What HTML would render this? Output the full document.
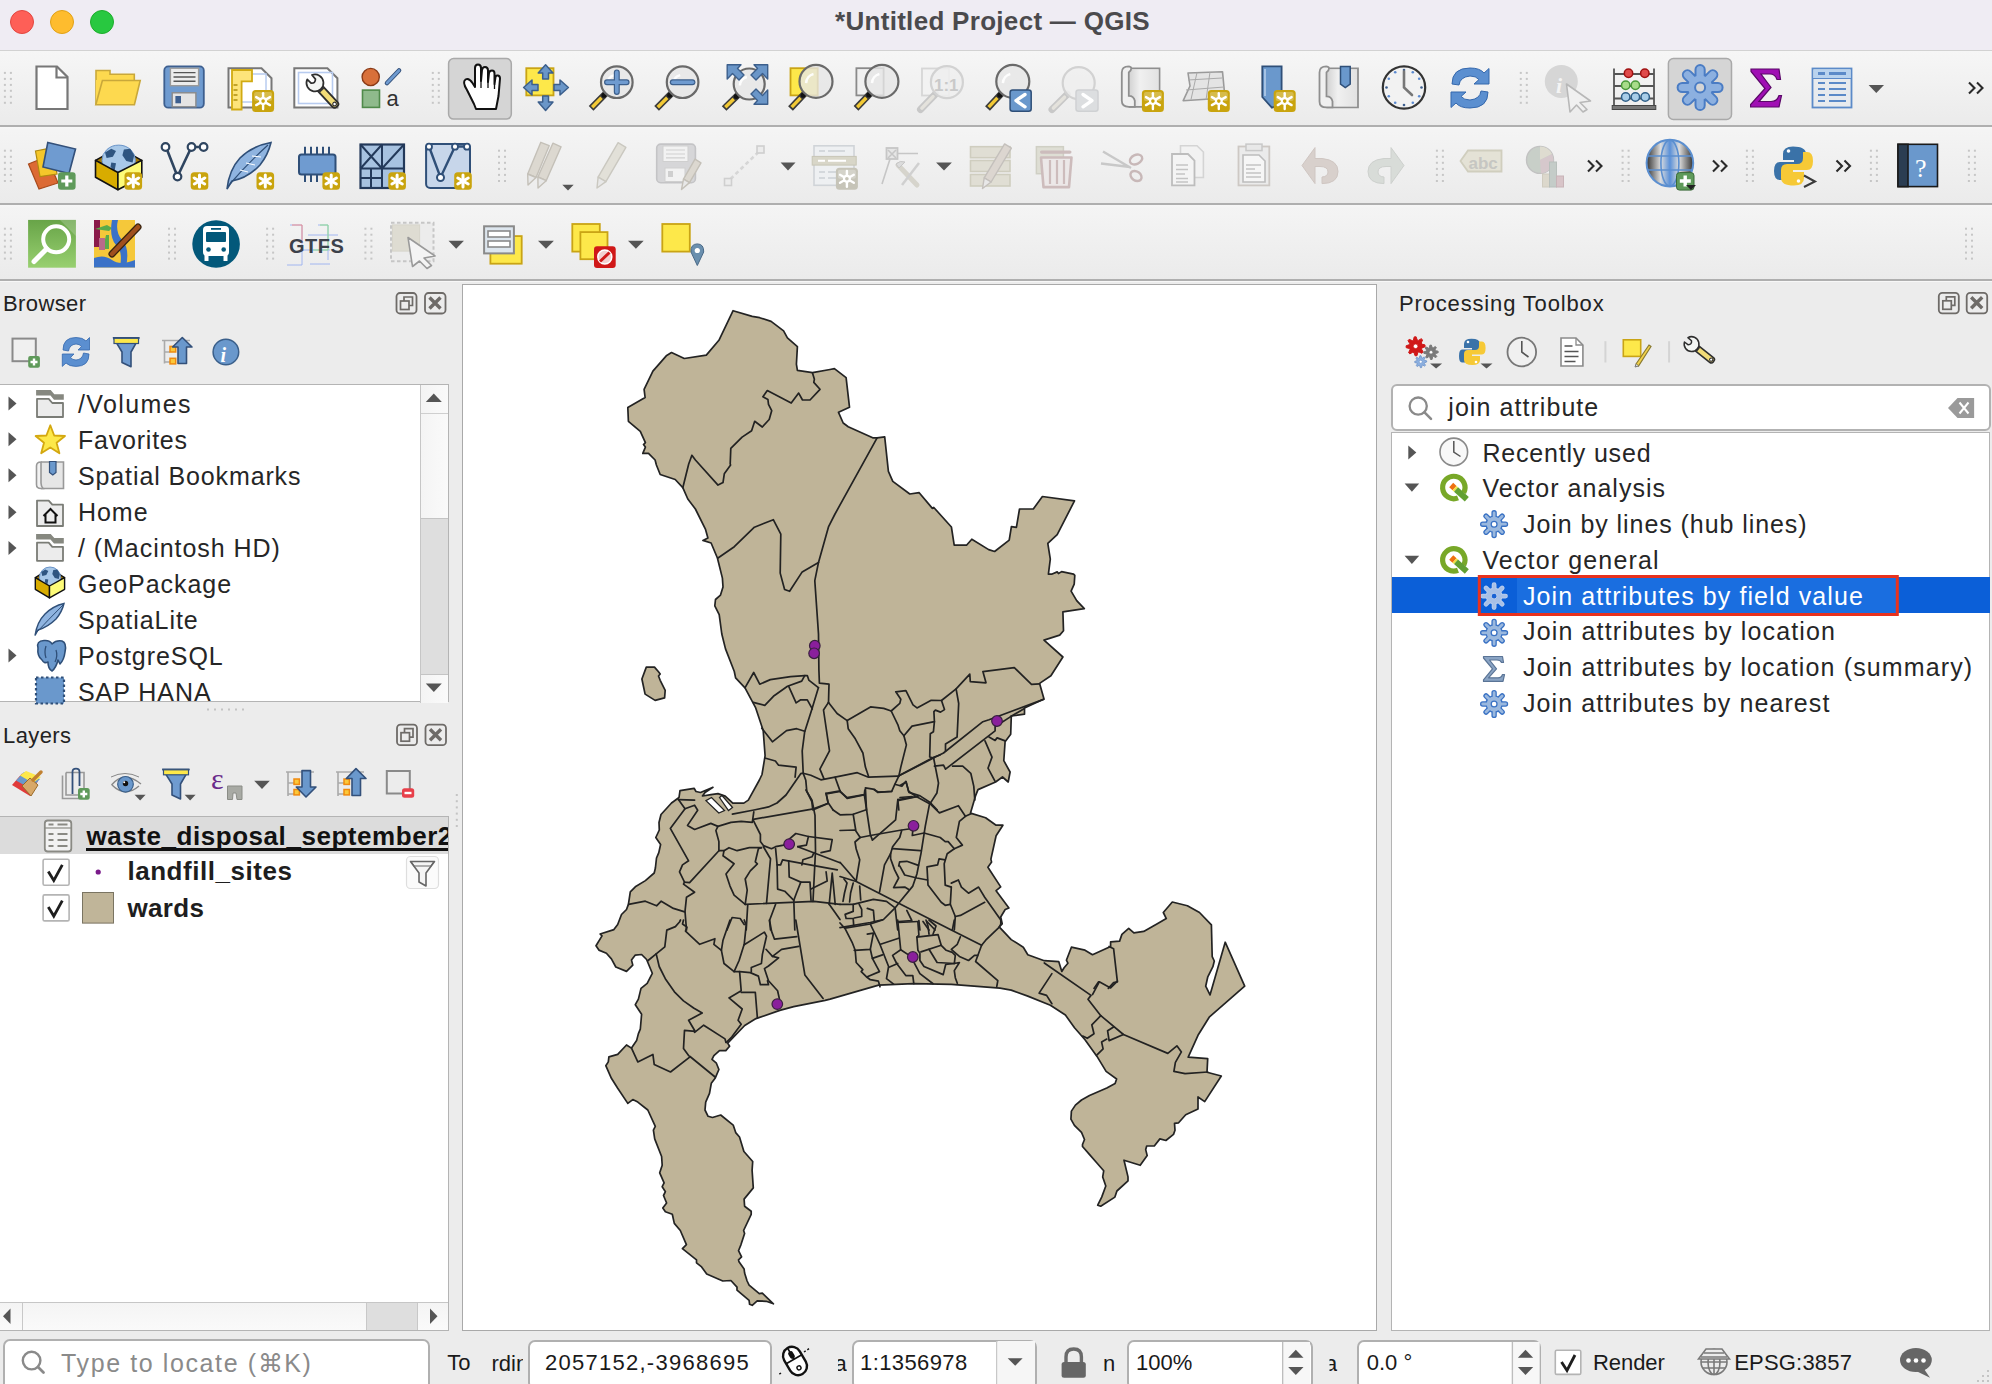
<!DOCTYPE html>
<html><head><meta charset="utf-8">
<style>
*{margin:0;padding:0;box-sizing:border-box}
html,body{width:1992px;height:1384px;overflow:hidden;background:#ececec;font-family:"Liberation Sans",sans-serif;color:#222}
.a{position:absolute}
.t{position:absolute;white-space:nowrap;line-height:1;font-family:"Liberation Sans",sans-serif}
svg{position:absolute;overflow:visible}
</style></head><body>
<!-- title bar -->
<div class="a" style="left:0;top:0;width:1992px;height:51px;background:#efecf3;border-bottom:1px solid #d2d2d2"></div>
<div class="a" style="left:10px;top:10px;width:24px;height:24px;border-radius:50%;background:#fe5f57;border:1px solid #e2463f"></div>
<div class="a" style="left:50px;top:10px;width:24px;height:24px;border-radius:50%;background:#febc2e;border:1px solid #e1a116"></div>
<div class="a" style="left:90px;top:10px;width:24px;height:24px;border-radius:50%;background:#28c840;border:1px solid #1dad2b"></div>
<div class="t" style="left:835px;top:8px;font-size:26px;font-weight:bold;color:#4b4a4d;letter-spacing:0.3px">*Untitled Project — QGIS</div>

<!-- toolbars -->
<div class="a" style="left:0;top:51px;width:1992px;height:76px;background:linear-gradient(#f6f6f6,#ebebeb);border-bottom:2px solid #afafaf"></div>
<div class="a" style="left:0;top:127px;width:1992px;height:78px;background:linear-gradient(#f7f7f7 0px,#f4f4f4 3px,#ebebeb);border-bottom:2px solid #afafaf"></div>
<div class="a" style="left:0;top:205px;width:1992px;height:76px;background:linear-gradient(#f7f7f7 0px,#f4f4f4 3px,#ebebeb);border-bottom:2px solid #afafaf"></div>

<div class="a" style="left:0;top:281px;width:1992px;height:1px;background:#f7f7f7"></div>
<!-- left dock: browser -->
<div class="t" style="left:3px;top:293px;font-size:22px;letter-spacing:0.4px;color:#222">Browser</div>
<div class="a" style="left:0;top:384px;width:449px;height:318px;background:#fff;border:1px solid #b4b4b4;border-left:none"></div>
<!-- browser scrollbar -->
<div class="a" style="left:420px;top:385px;width:28px;height:318px;background:linear-gradient(90deg,#f4f4f4,#fafafa);border-left:1px solid #c6c6c6"></div>
<div class="a" style="left:421px;top:518px;width:27px;height:157px;background:#dedede;border-top:1px solid #c4c4c4;border-bottom:1px solid #c4c4c4"></div>
<div class="a" style="left:421px;top:413px;width:27px;height:1px;background:#cfcfcf"></div>

<!-- layers -->
<div class="t" style="left:3px;top:725px;font-size:22px;letter-spacing:0.4px;color:#222">Layers</div>
<div class="a" style="left:0;top:816px;width:449px;height:515px;background:#fff;border:1px solid #b4b4b4;border-left:none"></div>
<div class="a" style="left:0;top:817px;width:448px;height:37px;background:#dcdcdc"></div>
<!-- h scrollbar -->
<div class="a" style="left:0;top:1302px;width:448px;height:28px;background:linear-gradient(#f4f4f4,#fafafa);border-top:1px solid #c6c6c6"></div>
<div class="a" style="left:22px;top:1303px;width:1px;height:27px;background:#c8c8c8"></div>
<div class="a" style="left:366px;top:1303px;width:52px;height:27px;background:#dedede;border-left:1px solid #c8c8c8;border-right:1px solid #c8c8c8"></div>

<!-- map canvas -->
<div class="a" style="left:462px;top:284px;width:915px;height:1047px;background:#fff;border:1px solid #a9a9a9"></div>

<!-- processing toolbox -->
<div class="t" style="left:1399px;top:293px;font-size:22px;letter-spacing:0.84px;color:#222">Processing Toolbox</div>
<div class="a" style="left:1391px;top:384px;width:600px;height:47px;background:#fff;border:2px solid #b2b2b2;border-radius:6px"></div>
<div class="a" style="left:1391px;top:432px;width:599px;height:899px;background:#fff;border:1px solid #b4b4b4"></div>
<div class="a" style="left:1392px;top:577px;width:598px;height:36px;background:#0b5fd8"></div>

<!-- status bar -->
<div class="a" style="left:3px;top:1339px;width:427px;height:52px;background:#fff;border:2px solid #b0b0b0;border-radius:7px"></div>
<div class="a" style="left:528px;top:1340px;width:244px;height:50px;background:#fff;border:2px solid #b0b0b0;border-radius:7px"></div>
<div class="a" style="left:852px;top:1340px;width:185px;height:50px;background:#fff;border:2px solid #b0b0b0;border-radius:7px"></div>
<div class="a" style="left:1127px;top:1340px;width:186px;height:50px;background:#fff;border:2px solid #b0b0b0;border-radius:7px"></div>
<div class="a" style="left:1357px;top:1340px;width:184px;height:50px;background:#fff;border:2px solid #b0b0b0;border-radius:7px"></div>

<svg style="left:0;top:0" width="1992" height="1384" viewBox="0 0 1992 1384">
<g stroke="#232323" stroke-width="1.7" stroke-linejoin="round" fill="#bfb498">
<polygon points="733.1,310.7 752.2,316.4 759.7,317.7 771.1,321.4 783.6,330.9 787.4,337.8 797.4,346.6 796.4,364.2 797.4,370.4 812.5,372.7 830,369.5 834.4,368.7 846.1,377.7 849.5,407.2 838.5,412.3 843.2,423 848.2,426.7 872.7,437.8 877.1,437.8 884.7,436.8 888.4,471.3 892.8,481.4 909.8,494 919.2,492.7 932.4,508.4 933.8,507.5 951.4,527 954.2,545.2 966.5,545.2 971.8,539.2 988.7,549.6 994.6,551.5 1009.2,540.2 1011.4,526.6 1016.4,527.4 1019.5,509 1033.3,509 1042.4,496.5 1074.5,500.9 1057.2,534.6 1047.8,543.4 1050.3,559.1 1048.4,574.2 1051.6,574.2 1057.2,571.9 1058.5,573.5 1061.6,571.6 1073.6,574.2 1074.8,575.4 1074.2,584.2 1071.1,591.1 1076.7,600.6 1084.3,608.7 1062.9,611.9 1063.5,630.7 1059.7,635.1 1044,640.1 1062.9,657 1050.9,675.8 1039.6,683.4 1044,699.1 1024.5,707.9 1024.5,714.2 1011.3,716 1010.7,734.3 1005.1,741.8 1003.8,760.7 1010.1,772 1008.2,782 1002.5,777 995.6,782 978,789.6 975.5,795.9 970.5,813.1 985.6,817.7 996.1,825.2 1002.9,825.2 996.1,835.7 990.9,859.1 991.6,862.1 987.9,867.3 1000.7,886.9 996.1,890.7 1008.9,908 1005.2,909.5 1000.7,917 1002.2,923.8 999.2,926.8 1011.2,939.6 1023.3,947.2 1027.8,954.7 1044.3,960.7 1058.8,961.7 1061.8,971.5 1064.1,967.7 1067.9,963.2 1066.4,960.2 1071.4,947.2 1085,950.2 1092.5,954.7 1110.6,946.4 1110.6,941.9 1119.6,941.1 1121.9,934.4 1128.7,928.3 1133.9,932.9 1143.7,931.4 1157.3,923.8 1166.3,918.6 1163.3,912.5 1172.3,902 1187.4,905.8 1199.5,912.5 1211.4,924.8 1212.2,956.6 1214.3,961 1212.9,966.7 1207.8,976.8 1205.7,986.2 1210,994.9 1225.2,942.2 1244.7,986.2 1209.2,1017.2 1198,1035.3 1188.2,1057.1 1207.7,1058.6 1207,1072.2 1221.3,1076 1204.7,1101.6 1198,1097 1198,1109.1 1185.7,1114.7 1178.6,1122.8 1174.5,1123.3 1175,1130.3 1173.5,1134.4 1165.9,1140.5 1159.9,1138.9 1154.3,1146 1146.7,1146 1145.7,1149.6 1147.2,1155.6 1140.2,1165.3 1124,1160.2 1128,1176.9 1128,1180.9 1116.9,1191 1114.9,1197.1 1100.7,1206.2 1097.7,1205.2 1101.7,1197.1 1105.8,1186 1102.7,1176.9 1103.7,1170.8 1096.7,1162.7 1089.6,1154.6 1082.5,1146.5 1082.5,1144.5 1084.5,1139.5 1081.5,1132.4 1074.4,1125.3 1070.9,1119.2 1071.4,1111.1 1075.4,1105.1 1081.5,1100 1089.5,1095.5 1106.8,1088 1115.1,1083.5 1116.6,1079 1106.1,1071.4 1097,1056.4 1085,1039.8 1074.5,1027.8 1065.4,1015 1050.4,1005.2 1027.8,996.1 1011.2,990.1 1000,988.1 951.4,984.3 913.5,983.6 878.6,985.1 830.1,999.1 825.1,1000.3 793.7,1006.6 779.8,1010.4 756,1018.6 744.7,1025.5 727.7,1043.1 729.6,1046.2 725.8,1050.6 719.5,1050.6 713.9,1055.6 712,1059.4 716.4,1063.2 718.9,1069.5 715.1,1078.3 711.3,1083.3 709.5,1093.3 705.7,1102.1 705,1110 708.1,1116.3 712.5,1117.5 720.7,1115 733.2,1125.1 735.7,1132.6 739.5,1137 743.9,1151.5 752.7,1161.5 752.1,1170.3 753.3,1187.9 744.1,1199.1 744.6,1206.2 751.2,1211.2 751.2,1214.3 743.6,1230.5 744.6,1233.5 741,1244.6 738.5,1250.7 741.6,1256.8 738.5,1259.8 739,1261.8 744.1,1268.9 744.6,1273 747.1,1281 749.1,1285.1 759.3,1293.7 762.3,1293.2 773.4,1303.8 766.3,1301.3 757.2,1300.8 752.2,1305.3 749.6,1304.3 749.1,1300.3 737,1290.2 737,1287.1 730.9,1280.5 722.8,1281 706.7,1274 701.6,1266.9 696.5,1262.8 696.5,1259.8 682.4,1248.7 686.4,1244.6 680.3,1230.5 674.3,1223.4 672.3,1214.3 665.4,1211.8 662.8,1208 666.6,1203 663.5,1195.5 665.4,1191.7 662.2,1186.7 664.1,1182.9 659.7,1172.8 662.2,1165.3 661.6,1156.5 654.7,1138.9 653.4,1130.1 655.3,1126.3 647.8,1110 637.8,1102.1 632.8,1099.6 627.8,1103.4 617.7,1088.3 611.4,1078.3 605.8,1065.7 608.3,1061.9 608.9,1056.9 617.7,1054.4 626.5,1045 631.5,1048.1 636.6,1040.6 638.4,1033.6 640.3,1029.2 641.6,1014.2 635.3,1004.7 638.4,999.1 641,988.4 647.2,983.4 652.3,973.3 646.6,959.5 641.6,954.5 635.3,955.1 631.5,960.1 632.8,965.1 626.5,971.4 615.8,967 611.4,958.9 606.4,953.2 598.9,950.1 596,945.8 602,935.9 600.1,934 613.9,929.6 617.7,924.5 621.5,914.5 626.5,909.5 628.4,904.4 630.3,891.9 635.3,886.8 645.4,880.6 654.2,873 655.4,868 656.5,858 658.8,852.6 660.6,844.5 655.8,837.5 659.3,830 659,822.5 661,814.5 671.5,803 679,797.5 680,790.6 694.1,788.3 696,791.5 700.5,792.5 713,787.3 705,792.5 702.5,796 711,794.6 718,793.6 725.2,796.1 732.8,803.1 743.8,803.1 748.3,800.1 759.4,780 762,774.5 765.1,755.7 763.2,730.6 755.7,707.9 745,687.8 735.6,677.8 734.3,671.5 725.5,648.9 721.8,634 719.2,614.6 714.8,605.8 715.5,599.5 720.5,595.1 723,587 722.4,578.1 717.4,558 711.1,543 702.9,540.4 707.9,537.9 705.4,529.1 695.4,509 687.8,499 682.8,487.7 675.2,479.5 667.7,477 660.2,474.5 656.4,465 655.1,460 648.5,453.4 642.8,453.4 645.4,447.1 643.5,444.6 645.4,442.7 640.3,431.4 628.4,421.3 627.8,407.5 645.1,397.5 644.1,389.3 652.9,371.1 666.7,355.4 671.5,352.5 684.3,358.5 706.3,355.1 718.9,340.3"/>
<polygon points="646.3,667.1 654.5,667.1 658.3,671.5 660.2,674 658.5,676 660.2,680.3 665.2,690.3 664.6,697.9 655.1,700.4 645.1,694.1 641.9,679"/>
</g>
<polygon points="706,800.6 711.5,797.5 724.5,810.5 718.8,813" fill="#fff" stroke="#232323" stroke-width="1.3"/>
<polygon points="719.5,797.5 722,795.5 732.5,807.5 728.5,810.5" fill="#fff" stroke="#232323" stroke-width="1.3"/>
<g stroke="#222222" stroke-width="1.7" stroke-linejoin="round" stroke-linecap="round" fill="none">
<polyline points="812.5,373 814.4,379.2 813.8,382.4 820,389.3 810,400 802.5,400 798.7,393.1 791.2,403.1 767.3,390.6 762.9,396.8 767.9,399.4 768.5,404.4 771.7,410.7 769.2,419.5 762.3,427 754.7,421.3 751.6,430.8 742.1,437.1 730.8,448.4 730.2,464 730.6,465 724.3,473.8 723,482.6 718,485.1 695.4,460 691.9,455.3 688.7,464 682.8,487.7"/>
<polyline points="877.1,437.8 835,514 828.6,526.6 818.5,562.4 814.8,580.7 818.5,634 818.9,670 819.4,683.2 829,684.2 828.5,702.4"/>
<polyline points="718,558 734.3,546.7 754.4,527.2 773.3,519.7 780.8,534.2 780.2,573.1 784.6,589.5 789.6,591.3 802.2,571.9 818.5,562.4"/>
<polyline points="745.1,687.7 753.7,672.5 759.7,684.2 770.3,679.6 790.6,676.6 804.7,675.6 807.3,675.6 808.8,680.1 818.4,687.7"/>
<polyline points="818.4,687.7 811.8,709.5 804.7,731.7 802.2,750.9 803.2,773.2 805.8,780.3 806.8,791.4 811.8,801.5 812.8,810 828,803.5"/>
<polyline points="753.2,702.4 764.8,705.4 773.4,696.3 787.5,686.2 801.7,681.1 804.7,675.6"/>
<polyline points="788.6,686.2 796.1,702.9 800.7,699.8 807.3,699.8 812.3,708.9"/>
<polyline points="761.8,728.2 772.4,741.8 786.5,730.7 796.7,728.7 804.7,731.2"/>
<polyline points="764.8,758 775.4,761 778.4,765.1 796.1,767.1 795.1,777.2"/>
<polyline points="732.4,814.2 754,810 768.5,806.9 777,803 786,795 800.7,773.7 803.2,773.2 810.8,775.2 820.9,779.8 835.1,777.2 857.3,772.7 868.5,777.2 897.8,776.2 934.2,757 940,755"/>
<polyline points="828.5,702.4 823.5,710 829.5,750.9 819.9,769.1 824,778.8"/>
<polyline points="828.5,702.4 837.1,713.5 847.2,720.6 870.5,706.9 883.7,708.4 891.2,711 899.8,703.4 900.8,699.3 895.8,691.8 905.9,690.7 913,704.9 917,707.9 931.2,700.3 941.5,700.5 956.1,688.8 969.8,674.2 970.3,681.7 986,682.8 982.9,671.6 1014.3,667.6 1031.5,684.3 1039.6,683.8"/>
<polyline points="847.2,720.6 848.2,728.7 855.3,738.8 862.9,753 865.4,767.1 868.5,776.2"/>
<polyline points="891.2,711 897.8,724.6 899.8,730.7 903.9,735.8 906.4,744.9 900.8,767.1 898.8,776.2"/>
<polyline points="903.9,735.8 912,726.1 934.4,721.7 933.9,711.6 935.4,710.1 940.5,712.1 944.5,709.6 941.5,700.5"/>
<polyline points="934.4,721.7 933.4,731.8 930.3,733.8 929.7,757 933.6,758"/>
<polyline points="898.8,776.2 894.8,784.3 901.9,786.3 905.9,781.3 908.9,792.4 920.1,795.9 930.2,802.5 937.3,810"/>
<polyline points="894.8,784.3 891.7,791.4 877.6,792.4 874.5,789.4 865.4,787.9 866.5,810"/>
<polyline points="835.1,777.2 840.2,791.4 847.2,798.5 863.9,794.9"/>
<polyline points="826,793.4 840.2,790.9"/>
<polyline points="826,793.4 828,802.5 833.1,810"/>
<polyline points="897.8,799.5 898.8,810"/>
<polyline points="897.8,799.5 918,796.5"/>
<polyline points="956.1,688.8 958.7,703.5 957.1,736.9 945.5,743.9 945.5,751"/>
<polyline points="1043.6,699.4 989,719.7 982.9,721.7 943.5,753 933.4,758.1 900,775.3"/>
<polyline points="1024.4,708.5 1010.7,716.6"/>
<polyline points="933.6,758 938.5,783 936.9,793 929.4,804.6 925.3,826.2 921.1,852.8 916.9,874 912.8,886.1 898.7,903.3 895.1,907.9 897.7,930"/>
<polyline points="934.4,766.2 943.5,765.2 945.5,769.2 995.1,730.8 995.1,726.8 1010.7,716.6"/>
<polyline points="952.6,766.2 962.7,766.2 970.8,773.3 973.8,786.4 974.8,800"/>
<polyline points="985,740.9 992,757.1 988,768.2 995.1,781.4"/>
<polyline points="989,736.9 995.1,740.4 997.1,737.9 1005.2,740.9"/>
<polyline points="900,785.4 906.1,781.9 908.6,791.3 914.4,795.4 931,804.6 939.4,812.9 958.4,805.7 965.4,816.3 971,813.8"/>
<polyline points="900,797.5 912.1,796.5"/>
<polyline points="753.3,819.3 812,809.2 828.2,803.2 826.3,794 840,791.5"/>
<polyline points="805.9,790 812,800.1 815,815.3 815.5,850.7 813,901.3"/>
<polyline points="678.4,799.6 694.6,800.1"/>
<polyline points="678.4,799.6 685,808.7 670.3,828.4 688.6,860.8 682.5,864.9 679.5,871.9 684.5,882.1 689.6,882.6 718.9,850.7 724,850.7 729,847.7 737.1,850.7 749.3,847.7 761.4,847.7"/>
<polyline points="685,808.7 694.6,805.2 697.7,810.2 687.5,825.4 694.6,829.5 710.8,823.4 717.9,826.4 731,822.4 741.2,821.4 752.3,822.4 753.8,811.8"/>
<polyline points="717.9,826.4 715.9,830.5 718.9,841.6 718.9,850.7"/>
<polyline points="753.3,820.3 760.4,834.5 760.4,841.6 763.4,845.6 771.5,848.7 775.6,846.7 783.7,845.1 788.7,839.6 795.8,833.5 808.4,836.5 806.4,845.1 797.8,846.7"/>
<polyline points="797.8,846.7 840,862.8"/>
<polyline points="808.4,836.5 832.2,839.6 830.2,850.7 821.1,852.7"/>
<polyline points="814,852.7 812,856.8 802.9,859.8 801.9,864.9"/>
<polyline points="761.4,847.7 758.4,848.7 755.3,861.8 757.4,863.8 750.3,870.9 745.2,879 747.2,890.2 745.2,904.3"/>
<polyline points="724,850.7 723,855.8 734.1,863.8 726,874 730,886.1 734.1,895.2 745.2,904.3"/>
<polyline points="763.4,846.7 770.5,858.8 766.5,903.3"/>
<polyline points="775.6,848.7 777.1,864.9 780.6,864.9 782.6,859.8 837.3,869.9"/>
<polyline points="777.1,864.9 777.6,889.1 784.7,891.2 793.8,900.3"/>
<polyline points="788.7,860.8 789.2,877 800.8,882.1 810,882.1 811,900.3"/>
<polyline points="800.8,882.1 796.8,892.2 793.8,900.3 794.8,930"/>
<polyline points="811,889.1 827.2,881 826.1,871.9"/>
<polyline points="745.2,904.3 814,901.3 840,904.3"/>
<polyline points="829.2,904.3 832.2,873 835.2,904.3"/>
<polyline points="829.2,904.3 840,919.5"/>
<polyline points="747.7,905.3 746.2,930"/>
<polyline points="775.6,904.3 769.5,920.5 770.5,930"/>
<polyline points="727,930 732.1,917.5 740.2,918.5 744.2,924.5"/>
<polyline points="628.6,904.3 645.3,901.2 656.6,905.8 661.2,901.2 673.4,908.4 684.7,911.9"/>
<polyline points="684.5,882.1 683.5,884.1 694.6,892.2 686.5,897.2 685,911.4 686.5,930"/>
<polyline points="840,791.5 847.1,797.6 864.3,794.6 864.8,790"/>
<polyline points="864.3,794.6 870.3,834.5 872.4,840.1 895.6,819.8 897.7,800.6 916.9,796.6"/>
<polyline points="874.4,790 878.4,792 891.6,791.5"/>
<polyline points="840,830.5 855.2,830 860.2,837.5 870.3,835.5"/>
<polyline points="833.1,810 840,814.8 853.2,814.3 866.3,809.7"/>
<polyline points="853.2,814.3 855.7,830"/>
<polyline points="860.2,837.5 855,842 856.2,849 859.7,859.8 858,870 856.2,881"/>
<polyline points="840,862.3 856.2,881"/>
<polyline points="840,876.5 856.2,881.5 898.7,903.3 951.3,930 981.6,945.3"/>
<polyline points="1044.3,963 1091,995.4 1088,999.2 1100.8,1015.7 1123.4,1034.5 1167.8,1053.4 1176.9,1045.8 1181.4,1051.9 1175.4,1062.4 1173.9,1071.4 1185.1,1073.7 1207.7,1072"/>
<polyline points="870.3,835.5 901.7,830 908.8,829"/>
<polyline points="901.7,830.5 899.7,837.5 892.6,846.7 890.6,853.7 884.5,864.9 879.5,892.2"/>
<polyline points="912.8,830.5 912.3,835.5 924,833 940.2,837.5 945.2,841.6 948.2,841.6 954.3,848.7 962.4,845.1 956.3,837.5 959.4,821.4 965.4,816.3"/>
<polyline points="892.6,848.7 920.4,850.7"/>
<polyline points="890.6,853.7 890.6,858.8 894.6,869.9 898.7,878 893.6,887.6 904.7,887.1 908.8,889.6"/>
<polyline points="898.7,865.9 899.7,861.8 906.8,861.3 918.4,865.4"/>
<polyline points="899.7,865.9 904.7,875 916.9,878 927.5,880"/>
<polyline points="954.3,848.7 947.2,853.7 944.2,863.8 945.2,885.1 951.3,887.1"/>
<polyline points="945.2,859.8 939.1,858.8 937.6,864.9 927,866.9 928,885.1 941.2,902.3 945.2,905.3 950.3,904.3"/>
<polyline points="951.3,883.1 958.4,880 961.4,887.1 968.5,893.2 978.6,887.1 984.7,897.2 1000.8,920"/>
<polyline points="951.3,887.1 950.3,904.3 955.3,916.5 954.3,930"/>
<polyline points="955.3,916.5 960.4,915.4 984.7,902.3"/>
<polyline points="840,904.3 853.2,904.3 873.4,899.3 886.5,901.3 895.1,907.9"/>
<polyline points="895.1,907.9 883.5,919.5 870.3,922.5 840,927.6"/>
<polyline points="844,879 847,883 844.5,893 843,901.3"/>
<polyline points="853.2,883 850.6,893 849.6,902"/>
<polyline points="859.7,886 860.7,900"/>
<polyline points="853.2,904.3 853.2,911.4 845.1,914.4 846.1,918.5 853.2,918.5 853.7,925.6"/>
<polyline points="859.2,904.3 861.7,909.4 861.7,916.5 854.2,918"/>
<polyline points="867.3,908.4 873.4,910.4 874.4,921.5"/>
<polyline points="906.8,910.4 911.8,920.5 898.7,921.5"/>
<polyline points="918.9,920.5 919.9,930"/>
<polyline points="923,921.5 929,930"/>
<polyline points="927,921.5 935.1,930"/>
<polyline points="648.1,960.5 656.2,953.9 664.8,946.8 666.8,930.1 675.4,926.6 679.5,922 680.5,920"/>
<polyline points="683.5,920 682.5,924 687,927.1 685.5,931.1 699.7,944.3 714.9,938.7 713.9,944.3 721.4,950.3 723,940.2 730,920"/>
<polyline points="656.2,953.9 659.2,966.5 665.3,978.7 674.4,991.8 683.5,1000.9 693.6,1008 702.2,1013.1 688.6,1020.2 695.1,1031.3 684.5,1030.3 683.5,1048.5 688.6,1055.6 690,1056.5 715.1,1077"/>
<polyline points="694.6,1032.3 703.7,1025.2 725,1038.9 726,1042.4"/>
<polyline points="721.4,950.3 724,963.5 734.1,971.6 739.6,971.6 741.2,990.8 729,997.9 742.2,1009 738.1,1020.2 741.2,1024.2 731.7,1037 726.4,1042.4"/>
<polyline points="734.1,971.6 739.1,960.5 744.2,944.3 746.2,925.1 744.2,920"/>
<polyline points="739.6,971.6 750.3,972.6 758.4,976.1 760.4,984.7 768.5,984.7 767.5,980.7"/>
<polyline points="741.2,992.3 755.3,992.3 757.4,1018.1"/>
<polyline points="744.2,944.8 764.4,932.1 766.5,936.2 762.4,954.4 761.4,963.5 751.3,967.5 751.3,971.6"/>
<polyline points="766,949.3 772.5,956.4 778.6,957.9 768.5,966 764.4,968.6 768.5,980.7 777.6,990.8 779.6,999.9"/>
<polyline points="772.5,956.4 781.6,949.3 798.8,946.3"/>
<polyline points="769.5,920 771.5,931.1 774.5,939.2 796.8,936.7"/>
<polyline points="795.8,920 804.9,975.1 823.1,998.4"/>
<polyline points="631.5,1048.1 637.8,1061.9 652.9,1054.4 654.2,1064.4 670.5,1072 690,1056.9"/>
<polyline points="840,923 845.1,928.6 852.1,942.3 855.2,950.3 856.2,962.5 862.8,969.6 861.2,971.6 866.3,976.7 870.3,979.7 878.4,981.2 880,986.8"/>
<polyline points="845.1,928.1 870.3,924 882.5,920"/>
<polyline points="870.3,924 879.5,943.3 888.6,966.5 886.5,978.7 893.6,984.2"/>
<polyline points="880.5,944.3 898.7,938.2"/>
<polyline points="897.7,920 900.7,949.8 892.6,955.4 896.7,963.5 905.8,975.6 912.8,975.6 913.8,983.7"/>
<polyline points="900.7,949.8 910.8,956.4 919.9,973.6 933.1,983.7"/>
<polyline points="889.6,967 897.7,963.5"/>
<polyline points="867.3,934.2 873.4,933.2 870.3,949.3 854.2,950.3"/>
<polyline points="872.4,958.4 882.5,954.9"/>
<polyline points="870.3,949.3 872.4,958.4 879.5,971.6 867.3,976.7"/>
<polyline points="898.7,922.5 917.9,921.5"/>
<polyline points="917.9,922 918.9,935.2 916.9,937.2 917.9,950.3 919.9,953.4 919.9,960.5 924,966.5 943.2,974.6 945.7,964.5 954.3,963.5"/>
<polyline points="916.9,937.2 938.1,934.7 941.2,945.3 920.9,951.9"/>
<polyline points="929,949.3 937.1,962.5 954.3,963.5"/>
<polyline points="941.2,945.3 946.2,950.3 952.3,952.4 955.3,955.4 954.3,963.5 959.4,962.5 954.3,970.6 955.3,977.7 957.3,983.2"/>
<polyline points="926,920 928,926 929,934.2"/>
<polyline points="929,920 936,926 933,934.2"/>
<polyline points="954.3,920 952.3,930.1"/>
<polyline points="960.4,936.7 957.3,944.3 951.3,949.3 959.4,956.4 968.5,960.5 974.5,955.4 977.6,955.4"/>
<polyline points="1000.8,920 1000.8,924 999.3,927.1 985.7,940.2 981.6,945.3 975.6,961.5 997.8,980.7 996.8,986.3"/>
<polyline points="1109.1,946.4 1113.6,948.7 1117.4,981.8 1113.6,982.6 1108.3,988.4"/>
<polyline points="1098.6,981.8 1094,988.4"/>
<polyline points="1051.9,973.6 1039.1,993.1 1046.6,995.4 1051.9,1003.7"/>
<polyline points="1092.5,994.6 1099.3,981.8 1110.6,987.9 1117.4,981.1"/>
<polyline points="1100.8,1015.7 1091.8,1024.8 1094,1033.8 1087.3,1038.3 1082.7,1036.1"/>
<polyline points="1113.6,1027 1107.6,1030.8 1109.1,1040.6 1123.4,1034.5"/>
<polyline points="1106.8,1039.1 1101.6,1042.1 1103.1,1048.9 1097,1054.9"/>
</g>
<g fill="#8a1f9c" stroke="#3a2040" stroke-width="1.2">
<circle cx="814.8" cy="645.7" r="5.3"/>
<circle cx="814.1" cy="653.3" r="5.3"/>
<circle cx="997" cy="721" r="5.3"/>
<circle cx="913.5" cy="825.8" r="5.3"/>
<circle cx="789.2" cy="844.1" r="5.3"/>
<circle cx="912.8" cy="957" r="5.3"/>
<circle cx="777.3" cy="1004.1" r="5.3"/>
</g></svg><svg style="left:0;top:0" width="1992" height="1384" viewBox="0 0 1992 1384">
<rect x="3.9" y="71.9" width="2" height="2" fill="#c6c6c6"/>
<rect x="9.9" y="71.9" width="2" height="2" fill="#c6c6c6"/>
<rect x="3.9" y="77.9" width="2" height="2" fill="#c6c6c6"/>
<rect x="9.9" y="77.9" width="2" height="2" fill="#c6c6c6"/>
<rect x="3.9" y="83.9" width="2" height="2" fill="#c6c6c6"/>
<rect x="9.9" y="83.9" width="2" height="2" fill="#c6c6c6"/>
<rect x="3.9" y="89.8" width="2" height="2" fill="#c6c6c6"/>
<rect x="9.9" y="89.8" width="2" height="2" fill="#c6c6c6"/>
<rect x="3.9" y="95.8" width="2" height="2" fill="#c6c6c6"/>
<rect x="9.9" y="95.8" width="2" height="2" fill="#c6c6c6"/>
<rect x="3.9" y="101.8" width="2" height="2" fill="#c6c6c6"/>
<rect x="9.9" y="101.8" width="2" height="2" fill="#c6c6c6"/>
<path d="M36.5 66.5H57L67.5 77V109H36.5Z" fill="#fff" stroke="#777" stroke-width="2.2"/><path d="M56.5 66.5V77.5H67.5" fill="none" stroke="#777" stroke-width="2.2"/>
<path d="M96 104.5V70.5H110V74.3H134.3V80.5" fill="#fdd94f" stroke="#c9a83a" stroke-width="1.6"/><path d="M96 80H134V104.5H96Z" fill="#fdd94f"/><path d="M102.4 80.5H140.2L134.4 104.7H95.8Z" fill="#fdd94f" stroke="#c9a83a" stroke-width="1.6"/>
<rect x="164.3" y="66.4" width="39.5" height="41.3" rx="4" fill="#6f9bd0" stroke="#3d5f8f" stroke-width="1.8"/><rect x="170.4" y="68.2" width="28.2" height="17.5" fill="#ececec" stroke="#9a9a9a" stroke-width="1.4"/><path d="M173.5 72.6h22M173.5 77h22M173.5 81.2h22" stroke="#555" stroke-width="1.4"/><rect x="172.2" y="92.8" width="23.7" height="14" fill="#e4e4e4" stroke="#8a8a8a" stroke-width="1.4"/><rect x="175.4" y="96" width="5.6" height="7.3" fill="#3d5f8f"/>
<path d="M228.5 68.2H261.5L271.5 78.2V107.4H228.5Z" fill="#fff" stroke="#777" stroke-width="2"/><rect x="236" y="74" width="30" height="28" fill="none" stroke="#b8ccf0" stroke-width="1.5"/><path d="M232 70H252V81.4H241.6V109.5H232Z" fill="#fde47a" stroke="#d1aa12" stroke-width="1.8"/>
<path d="M233.5 85h4M233.5 90h4M233.5 95h4M233.5 100h4" stroke="#b08e10" stroke-width="1.3"/>
<rect x="252.1" y="90.1" width="22.0" height="22.0" rx="3.5" fill="#c9a40e"/>
<rect x="254.1" y="92.1" width="18.0" height="9.0" rx="2" fill="#fff" opacity="0.25"/>
<g stroke="#fff" stroke-width="2.4" stroke-linecap="round">
<line x1="263.1" y1="101.1" x2="263.1" y2="93.2"/>
<line x1="263.1" y1="101.1" x2="256.2" y2="97.1"/>
<line x1="263.1" y1="101.1" x2="256.2" y2="105.1"/>
<line x1="263.1" y1="101.1" x2="263.1" y2="109.0"/>
<line x1="263.1" y1="101.1" x2="270.0" y2="105.1"/>
<line x1="263.1" y1="101.1" x2="270.0" y2="97.1"/>
</g><circle cx="263.1" cy="101.1" r="4" fill="#fff"/><circle cx="263.1" cy="101.1" r="1.8" fill="#c9a40e"/>
<path d="M294.3 68.2H327.4L337.4 78.2V107.4H294.3Z" fill="#fff" stroke="#777" stroke-width="2"/><rect x="298.5" y="72.5" width="34" height="31" fill="none" stroke="#b8ccf0" stroke-width="1.6"/>
<g transform="translate(315.00 83.00) rotate(47.00) scale(1.150)">
<rect x="5" y="-3" width="23" height="6" rx="2.5" fill="#f2dc78" stroke="#2e2e2e" stroke-width="1.6"/>
<rect x="4" y="-3" width="5" height="6" fill="#3a3a3a"/>
<path d="M-6.9 -2.8A7.4 7.4 0 1 1 -6.9 2.8L-2.2 2.6Q0.6 0 -2.2 -2.6Z" fill="#f4f6f4" stroke="#2e2e2e" stroke-width="1.5" stroke-linejoin="round"/>
<circle cx="25" cy="0" r="1.6" fill="#fff" stroke="#2e2e2e" stroke-width="1"/>
</g>
<circle cx="370.7" cy="77" r="8.6" fill="#d8703a" stroke="#8a3a16" stroke-width="1.4"/><line x1="387" y1="83" x2="399" y2="70.5" stroke="#33507a" stroke-width="4.6" stroke-linecap="round"/><line x1="387" y1="83" x2="399" y2="70.5" stroke="#6f9bd0" stroke-width="2.6" stroke-linecap="round"/><rect x="362.5" y="90.1" width="17" height="17.3" fill="#8fba8c" stroke="#4f8a4a" stroke-width="1.6"/>
<text x="386.5" y="106" font-family="Liberation Sans" font-size="22" fill="#333">a</text>
<rect x="431.8" y="71.9" width="2" height="2" fill="#c6c6c6"/>
<rect x="437.8" y="71.9" width="2" height="2" fill="#c6c6c6"/>
<rect x="431.8" y="77.9" width="2" height="2" fill="#c6c6c6"/>
<rect x="437.8" y="77.9" width="2" height="2" fill="#c6c6c6"/>
<rect x="431.8" y="83.9" width="2" height="2" fill="#c6c6c6"/>
<rect x="437.8" y="83.9" width="2" height="2" fill="#c6c6c6"/>
<rect x="431.8" y="89.8" width="2" height="2" fill="#c6c6c6"/>
<rect x="437.8" y="89.8" width="2" height="2" fill="#c6c6c6"/>
<rect x="431.8" y="95.8" width="2" height="2" fill="#c6c6c6"/>
<rect x="437.8" y="95.8" width="2" height="2" fill="#c6c6c6"/>
<rect x="431.8" y="101.8" width="2" height="2" fill="#c6c6c6"/>
<rect x="437.8" y="101.8" width="2" height="2" fill="#c6c6c6"/>
<rect x="448.6" y="58.5" width="62.7" height="60.6" rx="5" fill="#d5d5d5" stroke="#a9a9a9" stroke-width="1.5"/>
<path d="M474 104L467 90Q462 82 465.5 79.5Q469 77.5 472.5 83L475 87V68Q475 64.5 478 64.5Q481 64.5 481 68V81L482 70Q482.5 67 485 67Q488 67 488 70.5V82L489 73Q489.5 70.5 492 70.5Q494.5 70.5 494.5 73.5V84L495.5 77Q496 75 498 75.5Q500 76 500 78.5L498.5 96L496 109H476Z" fill="#fff" stroke="#111" stroke-width="2" stroke-linejoin="round"/>
<path d="M481 80V88M488 82V88M494.5 84V89" stroke="#111" stroke-width="1.3"/>
<rect x="526.3" y="68.2" width="27.2" height="27.2" fill="#fde84a" stroke="#c9a415" stroke-width="1.8"/>
<g fill="#6a96c8" stroke="#3c5f8c" stroke-width="1.5" stroke-linejoin="round"><path d="M545.6 64.7L553 73H548.5V79H542.7V73H538.2Z"/><path d="M545.6 110.4L553 102H548.5V96H542.7V102H538.2Z"/><path d="M523.6 87.5L532 80V84.5H538V90.5H532V95Z"/><path d="M568.4 87.5L560 80V84.5H554V90.5H560V95Z"/></g>
<line x1="605.7" y1="93.5" x2="591.1" y2="108.4" stroke="#3a3a3a" stroke-width="6.6" stroke-linecap="butt"/>
<line x1="601.5" y1="97.8" x2="592.2" y2="107.2" stroke="#f2c935" stroke-width="3.4" stroke-linecap="butt"/>
<circle cx="604.0" cy="95.3" r="2.5" fill="#111"/>
<circle cx="616.8" cy="82.2" r="15.8" fill="#e6e6e6" fill-opacity="0.8" stroke="#6a6a6a" stroke-width="2.2"/>
<path d="M607.3 83.8a9.5 9.5 0 0 1 7.1 -8.7" fill="none" stroke="#fff" stroke-width="2.5" opacity="0.9"/>
<path d="M607 82.2h19.6M616.8 72.4v19.6" stroke="#3c5f8c" stroke-width="6" stroke-linecap="round"/><path d="M607 82.2h19.6M616.8 72.4v19.6" stroke="#6f9bd0" stroke-width="3.6" stroke-linecap="round"/>
<line x1="671.5" y1="93.4" x2="656.6" y2="108.4" stroke="#3a3a3a" stroke-width="6.6" stroke-linecap="butt"/>
<line x1="667.2" y1="97.7" x2="657.8" y2="107.2" stroke="#f2c935" stroke-width="3.4" stroke-linecap="butt"/>
<circle cx="669.7" cy="95.2" r="2.5" fill="#111"/>
<circle cx="682.6" cy="82.2" r="15.8" fill="#e6e6e6" fill-opacity="0.8" stroke="#6a6a6a" stroke-width="2.2"/>
<path d="M673.1 83.8a9.5 9.5 0 0 1 7.1 -8.7" fill="none" stroke="#fff" stroke-width="2.5" opacity="0.9"/>
<path d="M672.8 82.2h19.6" stroke="#3c5f8c" stroke-width="6" stroke-linecap="round"/><path d="M672.8 82.2h19.6" stroke="#6f9bd0" stroke-width="3.6" stroke-linecap="round"/>
<line x1="738.1" y1="94.8" x2="724.1" y2="108.5" stroke="#3a3a3a" stroke-width="6.6" stroke-linecap="butt"/>
<line x1="733.8" y1="99.0" x2="725.3" y2="107.3" stroke="#f2c935" stroke-width="3.4" stroke-linecap="butt"/>
<circle cx="736.3" cy="96.6" r="2.5" fill="#111"/>
<circle cx="749.2" cy="84.0" r="15.5" fill="#e6e6e6" fill-opacity="0.8" stroke="#6a6a6a" stroke-width="2.2"/>
<path d="M739.9 85.5a9.3 9.3 0 0 1 7.0 -8.5" fill="none" stroke="#fff" stroke-width="2.5" opacity="0.9"/>
<g fill="#6a96c8" stroke="#3c5f8c" stroke-width="1.4" stroke-linejoin="round"><path d="M727.2 64.7H741L737.5 68.5L744 75L739 80L732.5 73.5L727.2 79Z"/><path d="M767.7 64.7H754L757.5 68.5L751 75L756 80L762.5 73.5L767.7 79Z"/><path d="M767.7 104.2H754L757.5 100.5L751 94L756 89L762.5 95.5L767.7 90Z"/></g>
<rect x="790.5" y="68.2" width="27.2" height="27.2" fill="#fde84a" stroke="#c9a415" stroke-width="1.8"/>
<line x1="804.7" y1="93.4" x2="790.5" y2="108.4" stroke="#3a3a3a" stroke-width="6.6" stroke-linecap="butt"/>
<line x1="800.6" y1="97.8" x2="791.7" y2="107.2" stroke="#f2c935" stroke-width="3.4" stroke-linecap="butt"/>
<circle cx="803.0" cy="95.2" r="2.5" fill="#111"/>
<circle cx="816.0" cy="81.4" r="16.5" fill="#e6e6e6" fill-opacity="0.8" stroke="#6a6a6a" stroke-width="2.2"/>
<path d="M806.1 83.1a9.9 9.9 0 0 1 7.4 -9.1" fill="none" stroke="#fff" stroke-width="2.5" opacity="0.9"/>
<rect x="856.4" y="68.2" width="27.2" height="27.2" fill="#f0f0f0" stroke="#8a8a8a" stroke-width="1.8"/>
<line x1="870.5" y1="93.3" x2="856.0" y2="108.4" stroke="#3a3a3a" stroke-width="6.6" stroke-linecap="butt"/>
<line x1="866.3" y1="97.7" x2="857.2" y2="107.2" stroke="#f2c935" stroke-width="3.4" stroke-linecap="butt"/>
<circle cx="868.8" cy="95.1" r="2.5" fill="#111"/>
<circle cx="881.9" cy="81.4" r="16.5" fill="#e6e6e6" fill-opacity="0.8" stroke="#6a6a6a" stroke-width="2.2"/>
<path d="M872.0 83.1a9.9 9.9 0 0 1 7.4 -9.1" fill="none" stroke="#fff" stroke-width="2.5" opacity="0.9"/>
<rect x="922" y="68.5" width="27" height="27" fill="#f2f2f2" stroke="#d6d6d6" stroke-width="1.8"/>
<line x1="935.8" y1="93.7" x2="920.5" y2="109.5" stroke="#c8c8c8" stroke-width="7" stroke-linecap="round"/>
<line x1="933.0" y1="96.6" x2="921.9" y2="108.1" stroke="#e4e2dc" stroke-width="3.5" stroke-linecap="round"/>
<circle cx="946.9" cy="82.2" r="16.0" fill="#eeeeee" fill-opacity="0.85" stroke="#d2d2d2" stroke-width="2.2"/>
<text x="934" y="91" font-family="Liberation Sans" font-weight="bold" font-size="17" fill="#c9c9c9">1:1</text>
<line x1="1001.5" y1="93.4" x2="987.5" y2="108.4" stroke="#3a3a3a" stroke-width="6.6" stroke-linecap="butt"/>
<line x1="997.4" y1="97.8" x2="988.7" y2="107.2" stroke="#f2c935" stroke-width="3.4" stroke-linecap="butt"/>
<circle cx="999.8" cy="95.3" r="2.5" fill="#111"/>
<circle cx="1012.8" cy="81.4" r="16.5" fill="#e6e6e6" fill-opacity="0.8" stroke="#6a6a6a" stroke-width="2.2"/>
<path d="M1002.9 83.1a9.9 9.9 0 0 1 7.4 -9.1" fill="none" stroke="#fff" stroke-width="2.5" opacity="0.9"/>
<rect x="1010.1" y="90.1" width="21.1" height="21.1" rx="2.5" fill="#6a98cc" stroke="#2f4f78" stroke-width="1.5"/><path d="M1025 94.5L1016 100.6L1025 106.8" fill="none" stroke="#fff" stroke-width="3.4" stroke-linejoin="round" stroke-linecap="round"/>
<line x1="1067.3" y1="94.3" x2="1052.0" y2="109.5" stroke="#c8c8c8" stroke-width="7" stroke-linecap="round"/>
<line x1="1064.5" y1="97.2" x2="1053.4" y2="108.1" stroke="#e4e2dc" stroke-width="3.5" stroke-linecap="round"/>
<circle cx="1078.7" cy="83.1" r="16.0" fill="#eeeeee" fill-opacity="0.85" stroke="#d2d2d2" stroke-width="2.2"/>
<rect x="1076" y="90.1" width="22" height="21.1" rx="2.5" fill="#dcdee0" stroke="#cfd1d3" stroke-width="1.5"/><path d="M1083 94.5L1092 100.6L1083 106.8" fill="none" stroke="#fff" stroke-width="3.4" stroke-linejoin="round" stroke-linecap="round"/>
<defs><linearGradient id="scrg" x1="0" x2="1"><stop offset="0" stop-color="#d4d4d4"/><stop offset="0.35" stop-color="#f0f0f0"/><stop offset="1" stop-color="#e2e2e2"/></linearGradient></defs>
<path d="M1128.8 68.4H1159.5V106.8H1128.8" fill="#e4e4e4" stroke="#8f8f8f" stroke-width="1.8"/>
<rect x="1129.8" y="69.4" width="28.7" height="36.4" fill="url(#scrg)"/>
<path d="M1128.8 66.4Q1121.8 66.4 1121.8 72.4V100.8Q1121.8 106.8 1128.8 106.8H1134.8V100.8Q1133.8 95.8 1128.8 95.8V72.4Q1133.8 67.4 1128.8 66.4" fill="#f0f0f0" stroke="#8f8f8f" stroke-width="1.8"/>
<rect x="1141.9" y="90.1" width="22.0" height="22.0" rx="3.5" fill="#c9a40e"/>
<rect x="1143.9" y="92.1" width="18.0" height="9.0" rx="2" fill="#fff" opacity="0.25"/>
<g stroke="#fff" stroke-width="2.4" stroke-linecap="round">
<line x1="1152.9" y1="101.1" x2="1152.9" y2="93.2"/>
<line x1="1152.9" y1="101.1" x2="1146.0" y2="97.1"/>
<line x1="1152.9" y1="101.1" x2="1146.0" y2="105.1"/>
<line x1="1152.9" y1="101.1" x2="1152.9" y2="109.0"/>
<line x1="1152.9" y1="101.1" x2="1159.8" y2="105.1"/>
<line x1="1152.9" y1="101.1" x2="1159.8" y2="97.1"/>
</g><circle cx="1152.9" cy="101.1" r="4" fill="#fff"/><circle cx="1152.9" cy="101.1" r="1.8" fill="#c9a40e"/>
<path d="M1188 73L1222.5 71.7L1225 98L1183.2 100.7L1190 86Z" fill="#e4e4e4" stroke="#9a9a9a" stroke-width="1.6" stroke-linejoin="round"/><path d="M1188 80l34 -2M1186 90l38 -3M1197 72.5l-6 27M1210 72l-4 28" fill="none" stroke="#aaa" stroke-width="1"/>
<rect x="1207.8" y="90.1" width="22.0" height="22.0" rx="3.5" fill="#c9a40e"/>
<rect x="1209.8" y="92.1" width="18.0" height="9.0" rx="2" fill="#fff" opacity="0.25"/>
<g stroke="#fff" stroke-width="2.4" stroke-linecap="round">
<line x1="1218.8" y1="101.1" x2="1218.8" y2="93.2"/>
<line x1="1218.8" y1="101.1" x2="1211.9" y2="97.1"/>
<line x1="1218.8" y1="101.1" x2="1211.9" y2="105.1"/>
<line x1="1218.8" y1="101.1" x2="1218.8" y2="109.0"/>
<line x1="1218.8" y1="101.1" x2="1225.7" y2="105.1"/>
<line x1="1218.8" y1="101.1" x2="1225.7" y2="97.1"/>
</g><circle cx="1218.8" cy="101.1" r="4" fill="#fff"/><circle cx="1218.8" cy="101.1" r="1.8" fill="#c9a40e"/>
<path d="M1262.3 66.4H1281.6V104L1271.9 107.7L1262.3 97Z" fill="#6a98cc" stroke="#2f4f78" stroke-width="1.8"/><path d="M1265 69v27" stroke="#cfe0f4" stroke-width="1.2"/>
<rect x="1273.7" y="90.1" width="22.0" height="22.0" rx="3.5" fill="#c9a40e"/>
<rect x="1275.7" y="92.1" width="18.0" height="9.0" rx="2" fill="#fff" opacity="0.25"/>
<g stroke="#fff" stroke-width="2.4" stroke-linecap="round">
<line x1="1284.7" y1="101.1" x2="1284.7" y2="93.2"/>
<line x1="1284.7" y1="101.1" x2="1277.8" y2="97.1"/>
<line x1="1284.7" y1="101.1" x2="1277.8" y2="105.1"/>
<line x1="1284.7" y1="101.1" x2="1284.7" y2="109.0"/>
<line x1="1284.7" y1="101.1" x2="1291.6" y2="105.1"/>
<line x1="1284.7" y1="101.1" x2="1291.6" y2="97.1"/>
</g><circle cx="1284.7" cy="101.1" r="4" fill="#fff"/><circle cx="1284.7" cy="101.1" r="1.8" fill="#c9a40e"/>
<path d="M1326.5 68.4H1358.0V107.4H1326.5" fill="#e4e4e4" stroke="#8f8f8f" stroke-width="1.8"/>
<rect x="1327.5" y="69.4" width="29.5" height="37.0" fill="url(#scrg)"/>
<path d="M1326.5 66.4Q1319.5 66.4 1319.5 72.4V101.4Q1319.5 107.4 1326.5 107.4H1332.5V101.4Q1331.5 96.4 1326.5 96.4V72.4Q1331.5 67.4 1326.5 66.4" fill="#f0f0f0" stroke="#8f8f8f" stroke-width="1.8"/>
<path d="M1340.5 66.4H1350.2V84L1345.3 87.5L1340.5 84Z" fill="#6a98cc" stroke="#2f4f78" stroke-width="1.5"/>
<circle cx="1404" cy="87.5" r="21.2" fill="#f2f2f2" stroke="#333" stroke-width="2.2"/>
<circle cx="1404.0" cy="70.0" r="1.3" fill="#3d5f8f"/>
<circle cx="1412.8" cy="72.3" r="1.3" fill="#5b8ad0"/>
<circle cx="1419.2" cy="78.8" r="1.3" fill="#5b8ad0"/>
<circle cx="1421.5" cy="87.5" r="1.3" fill="#3d5f8f"/>
<circle cx="1419.2" cy="96.2" r="1.3" fill="#5b8ad0"/>
<circle cx="1412.8" cy="102.7" r="1.3" fill="#5b8ad0"/>
<circle cx="1404.0" cy="105.0" r="1.3" fill="#3d5f8f"/>
<circle cx="1395.2" cy="102.7" r="1.3" fill="#5b8ad0"/>
<circle cx="1388.8" cy="96.2" r="1.3" fill="#5b8ad0"/>
<circle cx="1386.5" cy="87.5" r="1.3" fill="#3d5f8f"/>
<circle cx="1388.8" cy="78.8" r="1.3" fill="#5b8ad0"/>
<circle cx="1395.2" cy="72.3" r="1.3" fill="#5b8ad0"/>
<path d="M1404 71.5V87.5L1412 95" fill="none" stroke="#777" stroke-width="2.6" stroke-linecap="round"/>
<path d="M1452 84Q1452 68 1470 68Q1480 68 1484 73L1489 68.5V84H1474L1479 79.5Q1476 76 1470 76Q1460 77 1459 85Z" fill="#5b8fd0" stroke="#3568ad" stroke-width="1"/>
<path d="M1488 92Q1488 108 1470 108Q1460 108 1456 103L1451 107.5V92H1466L1461 96.5Q1464 100 1470 100Q1480 99 1481 91Z" fill="#5b8fd0" stroke="#3568ad" stroke-width="1"/>
<rect x="1519.8" y="71.9" width="2" height="2" fill="#c6c6c6"/>
<rect x="1525.8" y="71.9" width="2" height="2" fill="#c6c6c6"/>
<rect x="1519.8" y="77.9" width="2" height="2" fill="#c6c6c6"/>
<rect x="1525.8" y="77.9" width="2" height="2" fill="#c6c6c6"/>
<rect x="1519.8" y="83.9" width="2" height="2" fill="#c6c6c6"/>
<rect x="1525.8" y="83.9" width="2" height="2" fill="#c6c6c6"/>
<rect x="1519.8" y="89.8" width="2" height="2" fill="#c6c6c6"/>
<rect x="1525.8" y="89.8" width="2" height="2" fill="#c6c6c6"/>
<rect x="1519.8" y="95.8" width="2" height="2" fill="#c6c6c6"/>
<rect x="1525.8" y="95.8" width="2" height="2" fill="#c6c6c6"/>
<rect x="1519.8" y="101.8" width="2" height="2" fill="#c6c6c6"/>
<rect x="1525.8" y="101.8" width="2" height="2" fill="#c6c6c6"/>
<circle cx="1561.3" cy="81.4" r="16.5" fill="#d6d6d6"/><text x="1556" y="93" font-family="Liberation Serif" font-style="italic" font-weight="bold" font-size="22" fill="#f4f4f4">i</text>
<path d="M1566.5 84L1590.5 101L1580 102.5L1587 109.5L1583 112L1576.5 105L1570 112Z" fill="#f0f0f0" stroke="#b8b8b8" stroke-width="1.6" stroke-linejoin="round"/>
<path d="M1614 68.5V106M1654 68.5V106M1614 74h40M1614 86h40M1614 98.5h40" stroke="#555" stroke-width="1.8"/><rect x="1612.2" y="105.5" width="43.6" height="4" fill="#777" stroke="#444" stroke-width="1"/>
<circle cx="1628.5" cy="73.2" r="4.2" fill="#e04a4a" stroke="#a01010" stroke-width="1.5"/>
<circle cx="1644.8" cy="73.2" r="4.2" fill="#e04a4a" stroke="#a01010" stroke-width="1.5"/>
<circle cx="1625.7" cy="85.3" r="4.2" fill="#a8dc8a" stroke="#4a9a3a" stroke-width="1.5"/>
<circle cx="1635.4" cy="85.3" r="4.2" fill="#a8dc8a" stroke="#4a9a3a" stroke-width="1.5"/>
<circle cx="1625.7" cy="97.0" r="4.2" fill="#a8cde8" stroke="#2f5f88" stroke-width="1.5"/>
<circle cx="1635.4" cy="97.0" r="4.2" fill="#a8cde8" stroke="#2f5f88" stroke-width="1.5"/>
<circle cx="1645.2" cy="97.0" r="4.2" fill="#a8cde8" stroke="#2f5f88" stroke-width="1.5"/>
<rect x="1668.4" y="58.6" width="63.1" height="60.8" rx="5" fill="#d5d5d5" stroke="#a9a9a9" stroke-width="1.5"/>
<path d="M1700.10 87.50L1718.00 87.50M1700.10 87.50L1712.76 100.16M1700.10 87.50L1700.10 105.40M1700.10 87.50L1687.44 100.16M1700.10 87.50L1682.20 87.50M1700.10 87.50L1687.44 74.84M1700.10 87.50L1700.10 69.60M1700.10 87.50L1712.76 74.84" stroke="#4a7cc4" stroke-width="11.20" stroke-linecap="round"/>
<circle cx="1700.10" cy="87.50" r="14.00" fill="#4a7cc4"/>
<path d="M1700.10 87.50L1718.00 87.50M1700.10 87.50L1712.76 100.16M1700.10 87.50L1700.10 105.40M1700.10 87.50L1687.44 100.16M1700.10 87.50L1682.20 87.50M1700.10 87.50L1687.44 74.84M1700.10 87.50L1700.10 69.60M1700.10 87.50L1712.76 74.84" stroke="#8cb0e0" stroke-width="7.20" stroke-linecap="round"/>
<circle cx="1700.10" cy="87.50" r="12.00" fill="#8cb0e0"/>
<circle cx="1700.10" cy="87.50" r="5.00" fill="#d5d5d5" stroke="#4a7cc4" stroke-width="2.00"/>
<path d="M1751 69H1779L1780.5 79.5H1777Q1775 74 1770 74H1761L1771 87.5L1759 101.5H1771Q1777 101.5 1779 95.5H1781.5L1779 107H1750.6V104.5L1765 88.5L1751 71.5Z" fill="#a010b4" stroke="#5a0868" stroke-width="1.2"/>
<rect x="1812.5" y="68.5" width="39" height="39" fill="#e8ebee" stroke="#5b8ac8" stroke-width="1.8"/><rect x="1813.5" y="69.5" width="37" height="9" fill="#b9d3ee"/><path d="M1812.5 78.5h39" stroke="#5b8ac8" stroke-width="1.2"/><path d="M1818 73.5h7M1829 73.5h17" stroke="#5b8ac8" stroke-width="3"/>
<path d="M1818 83h7M1829 83h17M1818 89h7M1829 89h17M1818 95h7M1829 95h17M1818 101h7M1829 101h17" stroke="#5b8ac8" stroke-width="1.8"/>
<path d="M1868.6 85.0L1884.0 85.0L1876.3 93.1Z" fill="#555"/>
<path d="M1969.0 82.5l5.5 5.5l-5.5 5.5M1977.0 82.5l5.5 5.5l-5.5 5.5" fill="none" stroke="#2a2a2a" stroke-width="2.1"/>
<rect x="3.9" y="149.7" width="2" height="2" fill="#c6c6c6"/>
<rect x="9.9" y="149.7" width="2" height="2" fill="#c6c6c6"/>
<rect x="3.9" y="155.8" width="2" height="2" fill="#c6c6c6"/>
<rect x="9.9" y="155.8" width="2" height="2" fill="#c6c6c6"/>
<rect x="3.9" y="161.8" width="2" height="2" fill="#c6c6c6"/>
<rect x="9.9" y="161.8" width="2" height="2" fill="#c6c6c6"/>
<rect x="3.9" y="167.9" width="2" height="2" fill="#c6c6c6"/>
<rect x="9.9" y="167.9" width="2" height="2" fill="#c6c6c6"/>
<rect x="3.9" y="173.9" width="2" height="2" fill="#c6c6c6"/>
<rect x="9.9" y="173.9" width="2" height="2" fill="#c6c6c6"/>
<rect x="3.9" y="180.0" width="2" height="2" fill="#c6c6c6"/>
<rect x="9.9" y="180.0" width="2" height="2" fill="#c6c6c6"/>
<path d="M28.5 164L47 156.5L58 183L39 189Z" fill="#dc6a34" stroke="#a84a1c" stroke-width="1.2"/><path d="M35.5 151L52 147.8L57 174L40 176.5Z" fill="#f5c72a" stroke="#b08a10" stroke-width="1.2"/><path d="M47.8 142.5L75.5 149L69 173.5L43 167Z" fill="#6f9bd0" stroke="#33507a" stroke-width="1.6"/>
<rect x="58" y="172.2" width="17.6" height="17.5" rx="3" fill="#5f9a5a"/><path d="M66.8 175.5v11M61.3 181h11" stroke="#fff" stroke-width="3.2"/>
<path d="M95.5 160.4 L103.1 156.1 L134.2 156.1 L141.8 160.4 L117.9 172.5 L95.5 160.4 Z" fill="#a0780a" stroke="#111" stroke-width="1.5" stroke-linejoin="round"/>
<ellipse cx="118.7" cy="160.4" rx="16.7" ry="15.3" fill="#a8c8e8" stroke="#6a94c8" stroke-width="1"/>
<path d="M105.0 152.4 L111.3 148.8 L116.0 150.9 L112.9 156.7 L106.6 158.1 Z M111.3 162.5 L116.0 163.2 L114.5 171.1 L110.5 166.8 Z M123.9 149.5 L130.3 148.8 L134.2 155.3 L132.6 162.5 L126.3 161.0 L122.4 155.3 Z" fill="#2f5580"/>
<path d="M95.5 160.4 L117.9 172.5 L117.9 189.7 L95.5 177.3 Z" fill="#d8ac00" stroke="#111" stroke-width="1.6" stroke-linejoin="round"/>
<path d="M117.9 172.5 L141.8 160.4 L141.8 177.3 L117.9 189.7 Z" fill="#fdfb78" stroke="#111" stroke-width="1.6" stroke-linejoin="round"/>
<rect x="124.5" y="172.2" width="17.6" height="17.6" rx="3.5" fill="#c9a40e"/>
<g stroke="#fff" stroke-width="3" stroke-linecap="round">
<line x1="133.3" y1="181.0" x2="133.3" y2="175.0"/>
<line x1="133.3" y1="181.0" x2="128.1" y2="178.0"/>
<line x1="133.3" y1="181.0" x2="128.1" y2="184.0"/>
<line x1="133.3" y1="181.0" x2="133.3" y2="187.0"/>
<line x1="133.3" y1="181.0" x2="138.5" y2="184.0"/>
<line x1="133.3" y1="181.0" x2="138.5" y2="178.0"/>
</g>
<path d="M166 147L177.5 176.5L191.5 147H204" fill="none" stroke="#2f4560" stroke-width="2.6"/><circle cx="165.5" cy="147" r="3.8" fill="#fff" stroke="#2f4560" stroke-width="2.2"/><circle cx="177.5" cy="176.6" r="3.8" fill="#fff" stroke="#2f4560" stroke-width="2.2"/><circle cx="191.5" cy="147" r="3.8" fill="#fff" stroke="#2f4560" stroke-width="2.2"/><circle cx="203.6" cy="147" r="3.8" fill="#fff" stroke="#2f4560" stroke-width="2.2"/>
<rect x="190.7" y="172.2" width="17.6" height="17.6" rx="3.5" fill="#c9a40e"/>
<g stroke="#fff" stroke-width="3" stroke-linecap="round">
<line x1="199.5" y1="181.0" x2="199.5" y2="175.0"/>
<line x1="199.5" y1="181.0" x2="194.3" y2="178.0"/>
<line x1="199.5" y1="181.0" x2="194.3" y2="184.0"/>
<line x1="199.5" y1="181.0" x2="199.5" y2="187.0"/>
<line x1="199.5" y1="181.0" x2="204.7" y2="184.0"/>
<line x1="199.5" y1="181.0" x2="204.7" y2="178.0"/>
</g>
<path d="M227 189Q229 170 240 158Q252 146 271 142.5Q268 155 260 165Q248 178 232 181Z" fill="#8fb4e0" stroke="#2f4f78" stroke-width="1.6"/><path d="M230 184Q246 165 268 145" fill="none" stroke="#2f4f78" stroke-width="1.2"/><path d="M240 170l8 2M246 163l9 2M252 156l9 1" stroke="#fff" stroke-width="1"/>
<rect x="256.5" y="172.2" width="17.6" height="17.6" rx="3.5" fill="#c9a40e"/>
<g stroke="#fff" stroke-width="3" stroke-linecap="round">
<line x1="265.3" y1="181.0" x2="265.3" y2="175.0"/>
<line x1="265.3" y1="181.0" x2="260.1" y2="178.0"/>
<line x1="265.3" y1="181.0" x2="260.1" y2="184.0"/>
<line x1="265.3" y1="181.0" x2="265.3" y2="187.0"/>
<line x1="265.3" y1="181.0" x2="270.5" y2="184.0"/>
<line x1="265.3" y1="181.0" x2="270.5" y2="178.0"/>
</g>
<rect x="299" y="154.5" width="36.5" height="20" rx="2.5" fill="#6f9bd0" stroke="#2f4f78" stroke-width="2"/><path d="M305 146.7v7.5M311 146.7v7.5M317 146.7v7.5M323 146.7v7.5M329 146.7v7.5M305 175v7M311 175v7M317 175v7" stroke="#2f4f78" stroke-width="2"/>
<rect x="322.4" y="172.2" width="17.6" height="17.6" rx="3.5" fill="#c9a40e"/>
<g stroke="#fff" stroke-width="3" stroke-linecap="round">
<line x1="331.2" y1="181.0" x2="331.2" y2="175.0"/>
<line x1="331.2" y1="181.0" x2="326.0" y2="178.0"/>
<line x1="331.2" y1="181.0" x2="326.0" y2="184.0"/>
<line x1="331.2" y1="181.0" x2="331.2" y2="187.0"/>
<line x1="331.2" y1="181.0" x2="336.4" y2="184.0"/>
<line x1="331.2" y1="181.0" x2="336.4" y2="178.0"/>
</g>
<rect x="360.5" y="144.5" width="43.5" height="43.5" fill="#a7c2e0" stroke="#23395a" stroke-width="2.2"/><path d="M360.5 168.5H404M382 144.5V188M360.5 178H382M371 168.5V188M360.5 144.5L382 168.5M382 144.5L360.5 168.5M404 144.5L382 168.5" stroke="#23395a" stroke-width="2"/>
<rect x="388.3" y="172.2" width="17.6" height="17.6" rx="3.5" fill="#c9a40e"/>
<g stroke="#fff" stroke-width="3" stroke-linecap="round">
<line x1="397.1" y1="181.0" x2="397.1" y2="175.0"/>
<line x1="397.1" y1="181.0" x2="391.9" y2="178.0"/>
<line x1="397.1" y1="181.0" x2="391.9" y2="184.0"/>
<line x1="397.1" y1="181.0" x2="397.1" y2="187.0"/>
<line x1="397.1" y1="181.0" x2="402.3" y2="184.0"/>
<line x1="397.1" y1="181.0" x2="402.3" y2="178.0"/>
</g>
<rect x="426.1" y="144.1" width="43.9" height="43.9" rx="4" fill="#c7d6ea" stroke="#2f4f78" stroke-width="2"/><path d="M429 146.5L440.5 177.5L455 146.5H467" fill="none" stroke="#2f4f78" stroke-width="2.4"/><circle cx="440.5" cy="177.5" r="3.5" fill="#fff" stroke="#2f4f78" stroke-width="2"/><circle cx="455" cy="146.7" r="3" fill="#fff" stroke="#2f4f78" stroke-width="1.8"/><circle cx="429" cy="146.7" r="3" fill="#fff" stroke="#2f4f78" stroke-width="1.8"/><circle cx="467" cy="146.7" r="3" fill="#fff" stroke="#2f4f78" stroke-width="1.8"/>
<rect x="454.2" y="172.2" width="17.6" height="17.6" rx="3.5" fill="#c9a40e"/>
<g stroke="#fff" stroke-width="3" stroke-linecap="round">
<line x1="463.0" y1="181.0" x2="463.0" y2="175.0"/>
<line x1="463.0" y1="181.0" x2="457.8" y2="178.0"/>
<line x1="463.0" y1="181.0" x2="457.8" y2="184.0"/>
<line x1="463.0" y1="181.0" x2="463.0" y2="187.0"/>
<line x1="463.0" y1="181.0" x2="468.2" y2="184.0"/>
<line x1="463.0" y1="181.0" x2="468.2" y2="178.0"/>
</g>
<rect x="498.0" y="149.7" width="2" height="2" fill="#c6c6c6"/>
<rect x="504.0" y="149.7" width="2" height="2" fill="#c6c6c6"/>
<rect x="498.0" y="155.8" width="2" height="2" fill="#c6c6c6"/>
<rect x="504.0" y="155.8" width="2" height="2" fill="#c6c6c6"/>
<rect x="498.0" y="161.8" width="2" height="2" fill="#c6c6c6"/>
<rect x="504.0" y="161.8" width="2" height="2" fill="#c6c6c6"/>
<rect x="498.0" y="167.9" width="2" height="2" fill="#c6c6c6"/>
<rect x="504.0" y="167.9" width="2" height="2" fill="#c6c6c6"/>
<rect x="498.0" y="173.9" width="2" height="2" fill="#c6c6c6"/>
<rect x="504.0" y="173.9" width="2" height="2" fill="#c6c6c6"/>
<rect x="498.0" y="180.0" width="2" height="2" fill="#c6c6c6"/>
<rect x="504.0" y="180.0" width="2" height="2" fill="#c6c6c6"/>
<path d="M536.0 177.5L549.2 145.7L540.8 142.3L527.7 174.0L536.0 177.5Z" fill="#dcd8d0" stroke="#c4c0b8" stroke-width="1.4" stroke-linejoin="round"/>
<path d="M528.0 185.0L536.0 177.5L527.7 174.0Z" fill="#e8e8e8" stroke="#c4c0b8" stroke-width="1.4" stroke-linejoin="round"/>
<path d="M546.2 180.7L561.1 146.8L552.9 143.2L537.9 177.0L546.2 180.7Z" fill="#dcd8d0" stroke="#c4c0b8" stroke-width="1.4" stroke-linejoin="round"/>
<path d="M538.0 188.0L546.2 180.7L537.9 177.0Z" fill="#e8e8e8" stroke="#c4c0b8" stroke-width="1.4" stroke-linejoin="round"/>
<path d="M562.3 184.8L573.7 184.8L568.0 190.6Z" fill="#555"/>
<path d="M605.9 181.6L625.9 147.3L618.1 142.7L598.1 177.1L605.9 181.6Z" fill="#e2e0d8" stroke="#cac8c0" stroke-width="1.4" stroke-linejoin="round"/>
<path d="M597.0 188.0L605.9 181.6L598.1 177.1Z" fill="#e8e8e8" stroke="#cac8c0" stroke-width="1.4" stroke-linejoin="round"/>
<rect x="656.7" y="144.1" width="38.7" height="38.6" rx="4" fill="#d6d6d8" stroke="#c4c4c6" stroke-width="1.6"/><rect x="663" y="146" width="25" height="15.5" fill="#f2f2f2" stroke="#cfcfcf" stroke-width="1"/><path d="M666 150h19M666 154h19M666 157.8h19" stroke="#cfcfcf" stroke-width="1.2"/><rect x="665" y="168" width="20" height="13.5" fill="#f2f2f2" stroke="#cfcfcf"/><rect x="668" y="171" width="5" height="6" fill="#cfcfcf"/>
<path d="M689.5 182.6L701.0 162.8L695.0 159.2L683.5 179.1L689.5 182.6Z" fill="#dcd8d0" stroke="#c4c0b8" stroke-width="1.4" stroke-linejoin="round"/>
<path d="M681.5 189.5L689.5 182.6L683.5 179.1Z" fill="#e8e8e8" stroke="#c4c0b8" stroke-width="1.4" stroke-linejoin="round"/>
<path d="M730.5 179l28 -27" stroke="#d6d6d6" stroke-width="2.6" stroke-dasharray="4 3"/><rect x="724.5" y="178.5" width="7" height="7" fill="#ececec" stroke="#cfcfcf" stroke-width="1.6"/><rect x="757" y="146" width="7" height="7" fill="#ececec" stroke="#cfcfcf" stroke-width="1.6"/>
<path d="M780.6 162.5L795.5 162.5L788.0 170.4Z" fill="#555"/>
<rect x="814" y="145.8" width="40" height="39.5" fill="#eef0f2" stroke="#d0d4d8" stroke-width="1.6"/><path d="M819 151h6M828 151h17M819 172h6M828 172h17M819 178h6M828 178h17" stroke="#d4d8dc" stroke-width="2"/><rect x="812.2" y="156.4" width="44" height="8.7" fill="#d8d6c8" stroke="#c8c6b6" stroke-width="1"/><path d="M818 160.7h7M828 160.7h18" stroke="#fff" stroke-width="2"/>
<rect x="835.9" y="167.8" width="22.0" height="22.0" rx="3.5" fill="#c6c4b8"/>
<rect x="837.9" y="169.8" width="18.0" height="9.0" rx="2" fill="#fff" opacity="0.25"/>
<g stroke="#fff" stroke-width="2.4" stroke-linecap="round">
<line x1="846.9" y1="178.8" x2="846.9" y2="170.9"/>
<line x1="846.9" y1="178.8" x2="840.0" y2="174.8"/>
<line x1="846.9" y1="178.8" x2="840.0" y2="182.8"/>
<line x1="846.9" y1="178.8" x2="846.9" y2="186.7"/>
<line x1="846.9" y1="178.8" x2="853.8" y2="182.8"/>
<line x1="846.9" y1="178.8" x2="853.8" y2="174.8"/>
</g><circle cx="846.9" cy="178.8" r="4" fill="#fff"/><circle cx="846.9" cy="178.8" r="1.8" fill="#c6c4b8"/>
<rect x="886.5" y="148" width="11" height="11" fill="#e6e6e6" stroke="#c6c6c6" stroke-width="1.8"/><path d="M888 150l8 8M896 150l-8 8M897.5 153.5H918M890 159L882 184" stroke="#c6c6c6" stroke-width="1.6"/><path d="M898 165L917 185" stroke="#d6d4cc" stroke-width="5" stroke-linecap="round"/><path d="M896 164q4-4 9-2l-6 6z" fill="#dcdcdc" stroke="#c6c6c6"/><path d="M902 185L919 163" stroke="#d0d0d0" stroke-width="2.5"/>
<path d="M936.1 162.5L951.9 162.5L944.0 170.4Z" fill="#555"/>
<rect x="970.5" y="146.7" width="39.5" height="11" fill="#e0ded4" stroke="#cfcdbf" stroke-width="1.6"/><rect x="970.5" y="160.5" width="39.5" height="11" fill="#e0ded4" stroke="#cfcdbf" stroke-width="1.6"/><rect x="970.5" y="174.5" width="39.5" height="11.5" fill="#e0ded4" stroke="#cfcdbf" stroke-width="1.6"/>
<path d="M991.1 182.0L1011.4 148.1L1004.6 143.9L984.2 177.9L991.1 182.0Z" fill="#dcd6d0" stroke="#c4c0bc" stroke-width="1.4" stroke-linejoin="round"/>
<path d="M982.5 188.5L991.1 182.0L984.2 177.9Z" fill="#e8e8e8" stroke="#c4c0bc" stroke-width="1.4" stroke-linejoin="round"/>
<rect x="1036.4" y="146.7" width="27" height="27" fill="#deded4" stroke="#cfcfc4" stroke-width="1.5"/><rect x="1040" y="150.5" width="31.5" height="3.2" rx="1.6" fill="#ccbcbc"/><path d="M1041 157.5H1071.5L1069 187.1H1043.5Z" fill="#ece8e8" stroke="#cdbcbc" stroke-width="2.6" stroke-linejoin="round"/><path d="M1050 160v24M1057 160v24M1064 160v24" stroke="#cdbcbc" stroke-width="2.2"/>
<path d="M1101 163.5L1130 167M1103 151.5L1131 168" stroke="#c8c8c8" stroke-width="2.4"/><ellipse cx="1136" cy="159.5" rx="6.5" ry="4.5" fill="none" stroke="#c8b8b8" stroke-width="2.4" transform="rotate(-25 1136 159.5)"/><ellipse cx="1136" cy="176" rx="6" ry="4.5" fill="none" stroke="#c8b8b8" stroke-width="2.4" transform="rotate(35 1136 176)"/>
<path d="M1180.5 145.8H1197L1203.4 152V177.5H1180.5Z" fill="#f2f2f2" stroke="#d4d4d4" stroke-width="1.6"/><path d="M1172 154H1188L1194.5 160.5V185.4H1172Z" fill="#f4f4f4" stroke="#bdbdbd" stroke-width="1.8"/><path d="M1176 165h12M1176 169.5h12M1176 174h9M1176 178.5h12M1176 182h12" stroke="#c4c4c4" stroke-width="1.3"/>
<rect x="1238.5" y="146.5" width="30.8" height="38.9" fill="#ebebeb" stroke="#cdc8c4" stroke-width="1.8"/><rect x="1246" y="144.1" width="16" height="6.5" fill="#e8e8e8" stroke="#c8c8c8" stroke-width="1.5"/><path d="M1243 155H1259L1265 161V182H1243Z" fill="#f6f6f6" stroke="#bdbdbd" stroke-width="1.6"/><path d="M1246 165h15M1246 169h9M1246 173h15M1246 177h15" stroke="#c4c4c4" stroke-width="1.3"/>
<path d="M1302 165.5L1315 147.6V158.5H1322Q1338 160 1338 171.5Q1338 183.5 1322 183.6V177Q1328 176.5 1328 172Q1328 166.5 1320 166.5H1315V183.6Z" fill="#d8d0cc" stroke="#cfc6c2" stroke-width="1"/>
<path d="M1404 165.5L1391 147.6V158.5H1384Q1368 160 1368 171.5Q1368 183.5 1384 183.6V177Q1378 176.5 1378 172Q1378 166.5 1386 166.5H1391V183.6Z" fill="#d8dcd8" stroke="#cdd0cd" stroke-width="1"/>
<rect x="1435.9" y="149.7" width="2" height="2" fill="#c6c6c6"/>
<rect x="1441.9" y="149.7" width="2" height="2" fill="#c6c6c6"/>
<rect x="1435.9" y="155.8" width="2" height="2" fill="#c6c6c6"/>
<rect x="1441.9" y="155.8" width="2" height="2" fill="#c6c6c6"/>
<rect x="1435.9" y="161.8" width="2" height="2" fill="#c6c6c6"/>
<rect x="1441.9" y="161.8" width="2" height="2" fill="#c6c6c6"/>
<rect x="1435.9" y="167.9" width="2" height="2" fill="#c6c6c6"/>
<rect x="1441.9" y="167.9" width="2" height="2" fill="#c6c6c6"/>
<rect x="1435.9" y="173.9" width="2" height="2" fill="#c6c6c6"/>
<rect x="1441.9" y="173.9" width="2" height="2" fill="#c6c6c6"/>
<rect x="1435.9" y="180.0" width="2" height="2" fill="#c6c6c6"/>
<rect x="1441.9" y="180.0" width="2" height="2" fill="#c6c6c6"/>
<path d="M1460.5 161L1468 150.5H1501.5V171.5H1468Z" fill="#e4e2d6" stroke="#d0cebe" stroke-width="1.8"/><text x="1468.5" y="168.5" font-family="Liberation Sans" font-weight="bold" font-size="17" fill="#c6c6c2">abc</text>
<circle cx="1540" cy="159.9" r="13.5" fill="#c8cfc8" stroke="#c2c2c2" stroke-width="1.4"/><path d="M1540 159.9V146.4A13.5 13.5 0 0 1 1552 154Z" fill="#dedcd0"/><path d="M1540 159.9L1552 154A13.5 13.5 0 0 1 1541 173.4Z" fill="#d6c8cc"/><rect x="1542.5" y="174" width="7" height="13" fill="#dcd8cc" stroke="#d0ccc0"/><rect x="1549.5" y="162" width="7" height="25" fill="#c4ccc8" stroke="#b8c0bc"/><rect x="1556.5" y="176" width="7" height="11" fill="#d8c4c8" stroke="#c8b4b8"/>
<path d="M1588.0 160.5l5.5 5.5l-5.5 5.5M1596.0 160.5l5.5 5.5l-5.5 5.5" fill="none" stroke="#2a2a2a" stroke-width="2.1"/>
<rect x="1621.6" y="149.7" width="2" height="2" fill="#c6c6c6"/>
<rect x="1627.6" y="149.7" width="2" height="2" fill="#c6c6c6"/>
<rect x="1621.6" y="155.8" width="2" height="2" fill="#c6c6c6"/>
<rect x="1627.6" y="155.8" width="2" height="2" fill="#c6c6c6"/>
<rect x="1621.6" y="161.8" width="2" height="2" fill="#c6c6c6"/>
<rect x="1627.6" y="161.8" width="2" height="2" fill="#c6c6c6"/>
<rect x="1621.6" y="167.9" width="2" height="2" fill="#c6c6c6"/>
<rect x="1627.6" y="167.9" width="2" height="2" fill="#c6c6c6"/>
<rect x="1621.6" y="173.9" width="2" height="2" fill="#c6c6c6"/>
<rect x="1627.6" y="173.9" width="2" height="2" fill="#c6c6c6"/>
<rect x="1621.6" y="180.0" width="2" height="2" fill="#c6c6c6"/>
<rect x="1627.6" y="180.0" width="2" height="2" fill="#c6c6c6"/>
<defs><linearGradient id="glg" x1="0" x2="1"><stop offset="0" stop-color="#333"/><stop offset="0.3" stop-color="#ddd"/><stop offset="0.5" stop-color="#5a90d8"/><stop offset="0.7" stop-color="#ddd"/><stop offset="1" stop-color="#333"/></linearGradient></defs><circle cx="1669.9" cy="163.1" r="23.3" fill="url(#glg)" stroke="#5b8fd0" stroke-width="2"/><ellipse cx="1669.9" cy="163.1" rx="9" ry="23" fill="none" stroke="#5b8fd0" stroke-width="1.6"/><path d="M1647 156h46M1647 170h46" stroke="#5b8fd0" stroke-width="1.6"/>
<rect x="1676.5" y="172.6" width="17.5" height="17.5" rx="3" fill="#5f9a5a" stroke="#3a6a38" stroke-width="1"/><path d="M1685.2 175.5v11M1679.8 181h11" stroke="#fff" stroke-width="3.4"/><path d="M1686 185h10l-5 5z" fill="#222"/>
<path d="M1713.0 160.5l5.5 5.5l-5.5 5.5M1721.0 160.5l5.5 5.5l-5.5 5.5" fill="none" stroke="#2a2a2a" stroke-width="2.1"/>
<rect x="1745.9" y="149.7" width="2" height="2" fill="#c6c6c6"/>
<rect x="1751.9" y="149.7" width="2" height="2" fill="#c6c6c6"/>
<rect x="1745.9" y="155.8" width="2" height="2" fill="#c6c6c6"/>
<rect x="1751.9" y="155.8" width="2" height="2" fill="#c6c6c6"/>
<rect x="1745.9" y="161.8" width="2" height="2" fill="#c6c6c6"/>
<rect x="1751.9" y="161.8" width="2" height="2" fill="#c6c6c6"/>
<rect x="1745.9" y="167.9" width="2" height="2" fill="#c6c6c6"/>
<rect x="1751.9" y="167.9" width="2" height="2" fill="#c6c6c6"/>
<rect x="1745.9" y="173.9" width="2" height="2" fill="#c6c6c6"/>
<rect x="1751.9" y="173.9" width="2" height="2" fill="#c6c6c6"/>
<rect x="1745.9" y="180.0" width="2" height="2" fill="#c6c6c6"/>
<rect x="1751.9" y="180.0" width="2" height="2" fill="#c6c6c6"/>
<path d="M1793 146.5Q1783 146.5 1783 154V160H1794V162H1780Q1774 162 1774 171Q1774 180 1780 180H1784V174Q1784 168 1790 168H1800Q1806 168 1806 162V154Q1806 146.5 1793 146.5Z" fill="#3a72a8"/><circle cx="1788.5" cy="151" r="1.8" fill="#fff"/>
<path d="M1794 185.5Q1804 185.5 1804 178V172H1793V170H1807Q1813 170 1813 161Q1813 152 1807 152H1803V158Q1803 164 1797 164H1787Q1781 164 1781 170V178Q1781 185.5 1794 185.5Z" fill="#f6c936"/><circle cx="1798.5" cy="181" r="1.8" fill="#fff"/>
<path d="M1804 175.5L1815 181.5L1804 187" fill="none" stroke="#3a3a3a" stroke-width="2"/>
<path d="M1836.5 160.5l5.5 5.5l-5.5 5.5M1844.5 160.5l5.5 5.5l-5.5 5.5" fill="none" stroke="#2a2a2a" stroke-width="2.1"/>
<rect x="1869.9" y="149.7" width="2" height="2" fill="#c6c6c6"/>
<rect x="1875.9" y="149.7" width="2" height="2" fill="#c6c6c6"/>
<rect x="1869.9" y="155.8" width="2" height="2" fill="#c6c6c6"/>
<rect x="1875.9" y="155.8" width="2" height="2" fill="#c6c6c6"/>
<rect x="1869.9" y="161.8" width="2" height="2" fill="#c6c6c6"/>
<rect x="1875.9" y="161.8" width="2" height="2" fill="#c6c6c6"/>
<rect x="1869.9" y="167.9" width="2" height="2" fill="#c6c6c6"/>
<rect x="1875.9" y="167.9" width="2" height="2" fill="#c6c6c6"/>
<rect x="1869.9" y="173.9" width="2" height="2" fill="#c6c6c6"/>
<rect x="1875.9" y="173.9" width="2" height="2" fill="#c6c6c6"/>
<rect x="1869.9" y="180.0" width="2" height="2" fill="#c6c6c6"/>
<rect x="1875.9" y="180.0" width="2" height="2" fill="#c6c6c6"/>
<rect x="1898" y="144.3" width="39.5" height="42.3" fill="#6a98cc" stroke="#1a1a1a" stroke-width="1.6"/><rect x="1898" y="144.3" width="10" height="42.3" fill="#2b3d52" stroke="#1a1a1a" stroke-width="1.6"/><text x="1915" y="177" font-family="Liberation Serif" font-size="26" fill="#fff">?</text>
<rect x="1967.9" y="149.7" width="2" height="2" fill="#c6c6c6"/>
<rect x="1973.9" y="149.7" width="2" height="2" fill="#c6c6c6"/>
<rect x="1967.9" y="155.8" width="2" height="2" fill="#c6c6c6"/>
<rect x="1973.9" y="155.8" width="2" height="2" fill="#c6c6c6"/>
<rect x="1967.9" y="161.8" width="2" height="2" fill="#c6c6c6"/>
<rect x="1973.9" y="161.8" width="2" height="2" fill="#c6c6c6"/>
<rect x="1967.9" y="167.9" width="2" height="2" fill="#c6c6c6"/>
<rect x="1973.9" y="167.9" width="2" height="2" fill="#c6c6c6"/>
<rect x="1967.9" y="173.9" width="2" height="2" fill="#c6c6c6"/>
<rect x="1973.9" y="173.9" width="2" height="2" fill="#c6c6c6"/>
<rect x="1967.9" y="180.0" width="2" height="2" fill="#c6c6c6"/>
<rect x="1973.9" y="180.0" width="2" height="2" fill="#c6c6c6"/>
<rect x="3.9" y="227.7" width="2" height="2" fill="#c6c6c6"/>
<rect x="9.9" y="227.7" width="2" height="2" fill="#c6c6c6"/>
<rect x="3.9" y="233.7" width="2" height="2" fill="#c6c6c6"/>
<rect x="9.9" y="233.7" width="2" height="2" fill="#c6c6c6"/>
<rect x="3.9" y="239.7" width="2" height="2" fill="#c6c6c6"/>
<rect x="9.9" y="239.7" width="2" height="2" fill="#c6c6c6"/>
<rect x="3.9" y="245.6" width="2" height="2" fill="#c6c6c6"/>
<rect x="9.9" y="245.6" width="2" height="2" fill="#c6c6c6"/>
<rect x="3.9" y="251.6" width="2" height="2" fill="#c6c6c6"/>
<rect x="9.9" y="251.6" width="2" height="2" fill="#c6c6c6"/>
<rect x="3.9" y="257.6" width="2" height="2" fill="#c6c6c6"/>
<rect x="9.9" y="257.6" width="2" height="2" fill="#c6c6c6"/>
<defs><linearGradient id="qsg" x1="0" y1="0" x2="0" y2="1"><stop offset="0" stop-color="#68a448"/><stop offset="1" stop-color="#98d070"/></linearGradient></defs><rect x="28.1" y="219.9" width="47.8" height="47.8" fill="url(#qsg)"/><path d="M60 219.9H75.9V236Z" fill="#fff" opacity="0.2"/><circle cx="56.2" cy="239.3" r="13" fill="none" stroke="#fff" stroke-width="4"/><line x1="46.5" y1="249" x2="34" y2="261.5" stroke="#fff" stroke-width="5" stroke-linecap="round"/>
<rect x="94" y="220" width="41" height="47.5" fill="#f5c83a"/><path d="M94 220H100V247H94Z" fill="#8a1a4a"/><path d="M95 229l12-4 5 3-3 3zM106 235h3v14h-6z" fill="#5aaa4a"/><path d="M118 220q-3 12 4 20q8 8 4 27h-6q3-16-4-22q-7-8-4-25z" fill="#3a72c8"/><path d="M94 258q10-4 18 2t23 0v7.5H94z" fill="#3a72c8"/><rect x="99" y="238" width="6" height="12" fill="#b86a8a"/><path d="M112 254L138 227" stroke="#3a2410" stroke-width="7" stroke-linecap="round"/><path d="M112 254L138 227" stroke="#a0501e" stroke-width="4.5" stroke-linecap="round"/>
<rect x="168.0" y="227.7" width="2" height="2" fill="#c6c6c6"/>
<rect x="174.0" y="227.7" width="2" height="2" fill="#c6c6c6"/>
<rect x="168.0" y="233.7" width="2" height="2" fill="#c6c6c6"/>
<rect x="174.0" y="233.7" width="2" height="2" fill="#c6c6c6"/>
<rect x="168.0" y="239.7" width="2" height="2" fill="#c6c6c6"/>
<rect x="174.0" y="239.7" width="2" height="2" fill="#c6c6c6"/>
<rect x="168.0" y="245.6" width="2" height="2" fill="#c6c6c6"/>
<rect x="174.0" y="245.6" width="2" height="2" fill="#c6c6c6"/>
<rect x="168.0" y="251.6" width="2" height="2" fill="#c6c6c6"/>
<rect x="174.0" y="251.6" width="2" height="2" fill="#c6c6c6"/>
<rect x="168.0" y="257.6" width="2" height="2" fill="#c6c6c6"/>
<rect x="174.0" y="257.6" width="2" height="2" fill="#c6c6c6"/>
<circle cx="216.1" cy="244" r="23.8" fill="#03587a"/><rect x="203" y="226" width="26" height="30" rx="4" fill="#fff"/><rect x="206" y="232" width="20" height="10" rx="1" fill="#03587a"/><rect x="211" y="228" width="10" height="1.8" fill="#03587a"/><circle cx="208.5" cy="249.5" r="2.3" fill="#03587a"/><circle cx="223.7" cy="249.5" r="2.3" fill="#03587a"/><rect x="204.5" y="255" width="4" height="6" fill="#fff"/><rect x="223.5" y="255" width="4" height="6" fill="#fff"/>
<rect x="266.1" y="227.7" width="2" height="2" fill="#c6c6c6"/>
<rect x="272.1" y="227.7" width="2" height="2" fill="#c6c6c6"/>
<rect x="266.1" y="233.7" width="2" height="2" fill="#c6c6c6"/>
<rect x="272.1" y="233.7" width="2" height="2" fill="#c6c6c6"/>
<rect x="266.1" y="239.7" width="2" height="2" fill="#c6c6c6"/>
<rect x="272.1" y="239.7" width="2" height="2" fill="#c6c6c6"/>
<rect x="266.1" y="245.6" width="2" height="2" fill="#c6c6c6"/>
<rect x="272.1" y="245.6" width="2" height="2" fill="#c6c6c6"/>
<rect x="266.1" y="251.6" width="2" height="2" fill="#c6c6c6"/>
<rect x="272.1" y="251.6" width="2" height="2" fill="#c6c6c6"/>
<rect x="266.1" y="257.6" width="2" height="2" fill="#c6c6c6"/>
<rect x="272.1" y="257.6" width="2" height="2" fill="#c6c6c6"/>
<path d="M290 225h12M302 225v40h-15M318 225h10M328 225v35M308 235h30M300 250h30M310 264h20" fill="none" stroke="#9ab0f0" stroke-width="0.9"/><path d="M292 225h10v16" fill="none" stroke="#f09090" stroke-width="1"/><path d="M320 225h8v25h-15" fill="none" stroke="#90e090" stroke-width="1"/>
<text x="289" y="252.5" font-family="Liberation Sans" font-weight="bold" font-size="20" fill="#3c414a" letter-spacing="0.5">GTFS</text>
<rect x="364.4" y="227.7" width="2" height="2" fill="#c6c6c6"/>
<rect x="370.4" y="227.7" width="2" height="2" fill="#c6c6c6"/>
<rect x="364.4" y="233.7" width="2" height="2" fill="#c6c6c6"/>
<rect x="370.4" y="233.7" width="2" height="2" fill="#c6c6c6"/>
<rect x="364.4" y="239.7" width="2" height="2" fill="#c6c6c6"/>
<rect x="370.4" y="239.7" width="2" height="2" fill="#c6c6c6"/>
<rect x="364.4" y="245.6" width="2" height="2" fill="#c6c6c6"/>
<rect x="370.4" y="245.6" width="2" height="2" fill="#c6c6c6"/>
<rect x="364.4" y="251.6" width="2" height="2" fill="#c6c6c6"/>
<rect x="370.4" y="251.6" width="2" height="2" fill="#c6c6c6"/>
<rect x="364.4" y="257.6" width="2" height="2" fill="#c6c6c6"/>
<rect x="370.4" y="257.6" width="2" height="2" fill="#c6c6c6"/>
<rect x="391" y="222.8" width="42.5" height="38.5" fill="#ececec" stroke="#c6c6c6" stroke-width="2" stroke-dasharray="3.5 2.5"/><rect x="392.5" y="224.9" width="27.1" height="26.2" fill="#dedcd2" stroke="#d6d4ca" stroke-width="1"/>
<path d="M408 237.5L435 256L424 258L431.5 265.5L427 268.5L419.5 261L412.5 266.5Z" fill="#f4f4f4" stroke="#9a9a9a" stroke-width="1.6" stroke-linejoin="round"/>
<path d="M448.5 240.8L463.9 240.8L456.2 248.7Z" fill="#555"/>
<rect x="490.4" y="236.1" width="31.3" height="27.6" fill="#fde84a" stroke="#c9a415" stroke-width="1.8"/><rect x="484.1" y="226.3" width="29.8" height="27.1" fill="#dde6ee" stroke="#8a8a8a" stroke-width="2"/><rect x="488" y="231" width="22" height="6" fill="#fff" stroke="#8a8a8a" stroke-width="1.6"/><rect x="488" y="241" width="22" height="6" fill="#fff" stroke="#8a8a8a" stroke-width="1.6"/>
<path d="M538.0 240.8L553.9 240.8L546.0 248.7Z" fill="#555"/>
<rect x="572.3" y="224" width="27.5" height="27.6" fill="#fde84a" stroke="#c9a415" stroke-width="1.8"/><rect x="580.4" y="232.1" width="27.1" height="27.1" fill="#fde84a" stroke="#c9a415" stroke-width="1.8"/><rect x="594" y="246.2" width="21.7" height="21.7" rx="3" fill="#d01818"/><circle cx="604.8" cy="257" r="7" fill="#f2d0d0" stroke="#fff" stroke-width="1.5"/><path d="M600 261.5L609.5 252.5" stroke="#d01818" stroke-width="3"/>
<path d="M628.0 240.8L643.7 240.8L635.9 248.7Z" fill="#555"/>
<rect x="662.3" y="224" width="27.5" height="27.6" fill="#fde84a" stroke="#c9a415" stroke-width="1.8"/><path d="M697.3 265.5L691 252Q690.5 244 697.3 243.9Q704 244 703.7 252Z" fill="#6a8fae" stroke="#4a6a88" stroke-width="1"/><circle cx="697.3" cy="250.5" r="2.6" fill="#fff"/>
<rect x="1965.0" y="227.7" width="2" height="2" fill="#c6c6c6"/>
<rect x="1971.0" y="227.7" width="2" height="2" fill="#c6c6c6"/>
<rect x="1965.0" y="233.7" width="2" height="2" fill="#c6c6c6"/>
<rect x="1971.0" y="233.7" width="2" height="2" fill="#c6c6c6"/>
<rect x="1965.0" y="239.7" width="2" height="2" fill="#c6c6c6"/>
<rect x="1971.0" y="239.7" width="2" height="2" fill="#c6c6c6"/>
<rect x="1965.0" y="245.6" width="2" height="2" fill="#c6c6c6"/>
<rect x="1971.0" y="245.6" width="2" height="2" fill="#c6c6c6"/>
<rect x="1965.0" y="251.6" width="2" height="2" fill="#c6c6c6"/>
<rect x="1971.0" y="251.6" width="2" height="2" fill="#c6c6c6"/>
<rect x="1965.0" y="257.6" width="2" height="2" fill="#c6c6c6"/>
<rect x="1971.0" y="257.6" width="2" height="2" fill="#c6c6c6"/>
</svg>
<svg style="left:0;top:0" width="1992" height="1384" viewBox="0 0 1992 1384">
<rect x="396.5" y="293.0" width="20" height="20.5" rx="3.5" fill="none" stroke="#6e6b68" stroke-width="1.8"/>
<rect x="400.5" y="301.0" width="8.5" height="8.5" fill="none" stroke="#6e6b68" stroke-width="1.7"/><path d="M404.0 301.0V297.0H412.5V305.5H409.0" fill="none" stroke="#6e6b68" stroke-width="1.7"/>
<rect x="425.0" y="293.0" width="20.5" height="20.5" rx="3.5" fill="none" stroke="#6e6b68" stroke-width="1.8"/>
<path d="M429.5 297.5L440.5 308.5M440.5 297.5L429.5 308.5" stroke="#6e6b68" stroke-width="3.4"/>
<rect x="397.0" y="724.7" width="20" height="20.5" rx="3.5" fill="none" stroke="#6e6b68" stroke-width="1.8"/>
<rect x="401.0" y="732.7" width="8.5" height="8.5" fill="none" stroke="#6e6b68" stroke-width="1.7"/><path d="M404.5 732.7V728.7H413.0V737.2H409.5" fill="none" stroke="#6e6b68" stroke-width="1.7"/>
<rect x="425.5" y="724.7" width="20.5" height="20.5" rx="3.5" fill="none" stroke="#6e6b68" stroke-width="1.8"/>
<path d="M430.0 729.2L441.0 740.2M441.0 729.2L430.0 740.2" stroke="#6e6b68" stroke-width="3.4"/>
<rect x="1938.8" y="292.8" width="20" height="20.5" rx="3.5" fill="none" stroke="#6e6b68" stroke-width="1.8"/>
<rect x="1942.8" y="300.8" width="8.5" height="8.5" fill="none" stroke="#6e6b68" stroke-width="1.7"/><path d="M1946.3 300.8V296.8H1954.8V305.3H1951.3" fill="none" stroke="#6e6b68" stroke-width="1.7"/>
<rect x="1966.7" y="292.8" width="20.5" height="20.5" rx="3.5" fill="none" stroke="#6e6b68" stroke-width="1.8"/>
<path d="M1971.2 297.3L1982.2 308.3M1982.2 297.3L1971.2 308.3" stroke="#6e6b68" stroke-width="3.4"/>
<rect x="12.5" y="338.6" width="23.3" height="22.6" fill="#f0f0f0" stroke="#8a8a8a" stroke-width="2"/><rect x="28.2" y="356.1" width="11.7" height="11.6" rx="2" fill="#5f9a5a"/><path d="M34 358.5v7M30.5 362h7" stroke="#fff" stroke-width="2.4"/>
<path d="M63 350Q63 337.5 76 337.5Q83 337.5 86 341L89.5 337.5V350H78L81.5 346.5Q79.5 344 76 344Q69.5 344.5 68.5 351Z" fill="#5b8fd0" stroke="#3568ad" stroke-width="0.8"/><path d="M89 354Q89 366.4 76 366.4Q69 366.4 66 363L62.3 366.4V354H74L70.5 357.5Q72.5 360 76 360Q82.5 359.5 83.5 353Z" fill="#5b8fd0" stroke="#3568ad" stroke-width="0.8"/>
<path d="M113.5 337.8H139L131 352V366.8L122 362.5V352Z" fill="#6f9bd0" stroke="#33507a" stroke-width="1.6" stroke-linejoin="round"/><rect x="114" y="338.3" width="24.5" height="5.2" fill="#fde84a" stroke="#33507a" stroke-width="1.2"/>
<path d="M162 340.5H190M164.5 341V363.5M164.5 352H170M164.5 362H170" stroke="#aaa" stroke-width="1.6"/><rect x="170" y="346.4" width="5.7" height="5.6" fill="#fbc83a" stroke="#f08a10" stroke-width="1.5"/><rect x="170" y="358.3" width="5.7" height="5.6" fill="#fbc83a" stroke="#f08a10" stroke-width="1.5"/><path d="M182.3 337.5L192 347H186.5V363.5H178V347H172.6Z" fill="#6a98cc" stroke="#33507a" stroke-width="1.6" stroke-linejoin="round"/>
<circle cx="225.9" cy="352" r="12.8" fill="#6a98cc" stroke="#3a5f8a" stroke-width="1.5"/><text x="220.5" y="361.5" font-family="Liberation Serif" font-style="italic" font-weight="bold" font-size="20" fill="#fff">i</text>
<path d="M8.5 396.5L16.5 403.5L8.5 410.5Z" fill="#555"/>
<path d="M8.5 432.3L16.5 439.3L8.5 446.3Z" fill="#555"/>
<path d="M8.5 468.2L16.5 475.2L8.5 482.2Z" fill="#555"/>
<path d="M8.5 505.2L16.5 512.2L8.5 519.2Z" fill="#555"/>
<path d="M8.5 541.0L16.5 548.0L8.5 555.0Z" fill="#555"/>
<path d="M8.5 648.5L16.5 655.5L8.5 662.5Z" fill="#555"/>
<path d="M36.1 390.1H50.7L54.3 394.2H63.8V399.7H54.0L50.5 395.6H36.1Z" fill="#868880"/>
<path d="M37.0 398.9H48.7L52.3 403.0H63.0V417.0H37.0Z" fill="#ececec" stroke="#7a7c76" stroke-width="1.8" stroke-linejoin="round"/>
<path d="M36.1 533.9H50.7L54.3 538.0H63.8V543.5H54.0L50.5 539.4H36.1Z" fill="#868880"/>
<path d="M37.0 542.7H48.7L52.3 546.8H63.0V560.8H37.0Z" fill="#ececec" stroke="#7a7c76" stroke-width="1.8" stroke-linejoin="round"/>
<polygon points="50.3,425.3 54.2,435.5 65.0,436.0 56.6,442.8 59.4,453.3 50.3,447.4 41.2,453.3 44.0,442.8 35.6,436.0 46.4,435.5" fill="#fde84a" stroke="#d4a810" stroke-width="1.8" stroke-linejoin="round"/>
<path d="M41 462H63.5V488.5H41" fill="#e6e6e6" stroke="#999" stroke-width="1.6"/><path d="M41 462Q36.5 462 36.5 466V484.5Q36.5 488.5 41 488.5H43Q41 486 41 483V466Q41 462 41 462Z" fill="#f2f2f2" stroke="#999" stroke-width="1.6"/><path d="M49.5 461.5H56V472.5L52.8 475L49.5 472.5Z" fill="#6a98cc" stroke="#33507a" stroke-width="1.2"/>
<path d="M37 500.6H48.7L52.3 504.7H63V526H37Z" fill="#ececec" stroke="#7a7c76" stroke-width="1.8" stroke-linejoin="round"/><path d="M43.5 516L50.5 509L57.5 516M45.5 514.5V522.5H55.5V514.5" fill="none" stroke="#111" stroke-width="2"/>
<path d="M35.3 577.6 L40.1 574.6 L59.8 574.6 L64.6 577.6 L49.5 586.0 L35.3 577.6 Z" fill="#a0780a" stroke="#111" stroke-width="1.3" stroke-linejoin="round"/>
<ellipse cx="50.0" cy="577.6" rx="10.6" ry="10.6" fill="#a8c8e8" stroke="#6a94c8" stroke-width="1"/>
<path d="M41.3 572.0 L45.3 569.5 L48.3 571.0 L46.3 575.0 L42.3 576.0 Z M45.3 579.0 L48.3 579.5 L47.3 585.0 L44.8 582.0 Z M53.3 570.0 L57.3 569.5 L59.8 574.0 L58.8 579.0 L54.8 578.0 L52.3 574.0 Z" fill="#2f5580"/>
<path d="M35.3 577.6 L49.5 586.0 L49.5 597.9 L35.3 589.3 Z" fill="#d8ac00" stroke="#111" stroke-width="1.4" stroke-linejoin="round"/>
<path d="M49.5 586.0 L64.6 577.6 L64.6 589.3 L49.5 597.9 Z" fill="#fdfb78" stroke="#111" stroke-width="1.4" stroke-linejoin="round"/>
<path d="M35 635.5Q37 622 45 614Q53 606 64 603.5Q62 612 56 619Q48 627 38 630Z" fill="#8fb4e0" stroke="#2f4f78" stroke-width="1.4"/><path d="M37 632Q48 620 63 605" fill="none" stroke="#2f4f78" stroke-width="1"/>
<path d="M38 648Q36 641 44 640.5Q50 640 52 644Q56 640 62 641Q67 643 65 652Q64 660 60 664L58 660Q56 668 52 671Q48 669 48 662Q44 664 42 660Q37 656 38 648Z" fill="#6a98cc" stroke="#2f4f78" stroke-width="1.6" stroke-linejoin="round"/><path d="M46 646Q44 652 46 658M56 650Q58 656 55 662" fill="none" stroke="#2f4f78" stroke-width="1.3"/>
<rect x="36" y="677.5" width="28" height="26" fill="#6a98cc" stroke="#2f4f78" stroke-width="2.2" stroke-dasharray="2.5 2.5"/><rect x="39.5" y="680.5" width="21" height="21" fill="#6a98cc"/>
<path d="M425.8 402.1H441.8L433.8 393.5Z" fill="#555"/><path d="M425.8 683.4H441.8L433.8 692Z" fill="#555"/>
<rect x="207.0" y="708.5" width="2" height="2" fill="#c4c4c4"/>
<rect x="214.0" y="708.5" width="2" height="2" fill="#c4c4c4"/>
<rect x="221.0" y="708.5" width="2" height="2" fill="#c4c4c4"/>
<rect x="228.0" y="708.5" width="2" height="2" fill="#c4c4c4"/>
<rect x="235.0" y="708.5" width="2" height="2" fill="#c4c4c4"/>
<rect x="242.0" y="708.5" width="2" height="2" fill="#c4c4c4"/>
<path d="M12 785L22 773.5L38 781L30 796Z" fill="#e03a3a"/><path d="M16 780.5L24 772L40 779L31 789Z" fill="#6a98cc"/><path d="M20 775.5L26 771L41 777L33 783Z" fill="#fde84a"/><path d="M22 786L30 778L38 785L31 796Z" fill="#d8a868" stroke="#9a6a28" stroke-width="1"/><path d="M33 780L41 772" stroke="#c08030" stroke-width="3.5" stroke-linecap="round"/>
<path d="M62.5 775.5V798.5H80M66 772.5V795H84V772.5H66" fill="none" stroke="#999" stroke-width="1.6"/><path d="M72.5 794V772Q72.5 768.7 76 768.7Q79.5 768.7 79.5 772V786" fill="none" stroke="#33507a" stroke-width="1.8"/><rect x="78" y="788" width="11.7" height="11.8" rx="2.5" fill="#5f9a5a"/><path d="M83.8 790.5v7M80.3 794h7" stroke="#fff" stroke-width="2.4"/>
<path d="M111.5 785Q124 770 141 784" fill="none" stroke="#888" stroke-width="1.4"/><path d="M112 785Q125 798 139 786" fill="none" stroke="#888" stroke-width="1.4"/><path d="M111 777Q125 770 139 777" fill="none" stroke="#888" stroke-width="1"/><circle cx="125.5" cy="784.3" r="7.8" fill="#6a98cc" stroke="#3a5f8a" stroke-width="1.2"/><circle cx="125.5" cy="783.5" r="2.7" fill="#111"/><circle cx="124.2" cy="782.3" r="1" fill="#fff"/>
<path d="M134.6 794.7H145.6L140.1 800.5Z" fill="#555"/>
<path d="M162.8 769.3H189L180.5 784V799L172 795V784Z" fill="#6f9bd0" stroke="#33507a" stroke-width="1.6" stroke-linejoin="round"/><rect x="163.5" y="769.8" width="25" height="5" fill="#fde84a" stroke="#33507a" stroke-width="1.2"/>
<path d="M184.6 794.7H195.6L190.1 800.5Z" fill="#555"/>
<text x="211" y="789" font-family="Liberation Serif" font-size="30" fill="#6a2a8a">&#949;</text><path d="M227.5 786H242V799.5H237L236 793L233 793L232.5 799.5H227.5Z" fill="#a8aaa4" stroke="#8a8c86" stroke-width="1"/>
<path d="M254.2 780.8H269.8L262.0 788.9Z" fill="#555"/>
<path d="M286 772H314M288 772.5V796M288 783H295M288 794H295" stroke="#aaa" stroke-width="1.6"/><rect x="294" y="779" width="5.4" height="5.4" fill="#fbc83a" stroke="#f08a10" stroke-width="1.5"/><rect x="294" y="789.5" width="5.4" height="5.4" fill="#fbc83a" stroke="#f08a10" stroke-width="1.5"/><path d="M306 797L316 787H310.5V770.6H302V787H296.3Z" fill="#6a98cc" stroke="#33507a" stroke-width="1.6" stroke-linejoin="round"/>
<path d="M336 772H364M338 772.5V796M338 783H345M338 794H345" stroke="#aaa" stroke-width="1.6"/><rect x="344" y="779" width="5.4" height="5.4" fill="#fbc83a" stroke="#f08a10" stroke-width="1.5"/><rect x="344" y="789.5" width="5.4" height="5.4" fill="#fbc83a" stroke="#f08a10" stroke-width="1.5"/><path d="M356 768.6L366 778.5H360.5V795.5H352V778.5H346.3Z" fill="#6a98cc" stroke="#33507a" stroke-width="1.6" stroke-linejoin="round"/>
<rect x="386.8" y="771" width="23" height="22.5" fill="none" stroke="#8a8a8a" stroke-width="2"/><rect x="402" y="788.2" width="12.2" height="9.5" rx="2.5" fill="#e8404a"/><path d="M404.5 793h7" stroke="#fff" stroke-width="2.4"/>
<rect x="455.8" y="794.0" width="2" height="2" fill="#c4c4c4"/>
<rect x="455.8" y="800.2" width="2" height="2" fill="#c4c4c4"/>
<rect x="455.8" y="806.4" width="2" height="2" fill="#c4c4c4"/>
<rect x="455.8" y="812.6" width="2" height="2" fill="#c4c4c4"/>
<rect x="455.8" y="818.8" width="2" height="2" fill="#c4c4c4"/>
<rect x="455.8" y="825.0" width="2" height="2" fill="#c4c4c4"/>
<rect x="44.8" y="820.5" width="26.5" height="31" rx="3" fill="#f2f2f2" stroke="#8a8a84" stroke-width="1.8"/><path d="M44.8 828H71.3" stroke="#8a8a84" stroke-width="1.2"/><path d="M48.5 824.5h5M57.5 824.5h10M48.5 834h5M57.5 834h10M48.5 840h5M57.5 840h10M48.5 846h5M57.5 846h10" stroke="#8a8a84" stroke-width="1.8"/>
<rect x="43.1" y="859.2" width="26" height="26" rx="1.5" fill="#fff" stroke="#b4b4b4" stroke-width="1.6"/>
<path d="M48.3 871.4L53.8 880.4L62.3 864.9" fill="none" stroke="#1e1e1e" stroke-width="2.8" stroke-linejoin="miter"/>
<rect x="43.1" y="894.9" width="26" height="26" rx="1.5" fill="#fff" stroke="#b4b4b4" stroke-width="1.6"/>
<path d="M48.3 907.1L53.8 916.1L62.3 900.6" fill="none" stroke="#1e1e1e" stroke-width="2.8" stroke-linejoin="miter"/>
<circle cx="98.2" cy="872" r="2.6" fill="#7a1a8a"/>
<rect x="82.5" y="892.5" width="31" height="30.6" fill="#c0b599" stroke="#7a7462" stroke-width="1"/>
<rect x="406.5" y="856.5" width="32" height="32" rx="4" fill="#fbfbfb" stroke="#dedede" stroke-width="1.2"/><path d="M410.5 861.5H434.5L426 873V886L419 882V873Z" fill="#f4f4f4" stroke="#666" stroke-width="1.6" stroke-linejoin="round"/><path d="M411 861.5L414 866H431L434 861.5" fill="none" stroke="#666" stroke-width="1.2"/>
<path d="M10.5 1308.5V1324L3 1316.2Z" fill="#555"/><path d="M430 1308.5V1324L437.5 1316.2Z" fill="#555"/>
<polygon points="1414.2,336.9 1416.1,336.8 1417.2,340.0 1418.4,340.4 1421.3,338.7 1422.6,339.9 1421.2,343.0 1421.7,344.1 1425.0,344.9 1425.1,346.8 1421.9,347.9 1421.5,349.1 1423.2,352.0 1422.0,353.3 1418.9,351.9 1417.8,352.4 1417.0,355.7 1415.1,355.8 1414.0,352.6 1412.8,352.2 1409.9,353.9 1408.6,352.7 1410.0,349.6 1409.5,348.5 1406.2,347.7 1406.1,345.8 1409.3,344.7 1409.7,343.5 1408.0,340.6 1409.2,339.3 1412.3,340.7 1413.4,340.2" fill="#d01818" stroke="#d01818" stroke-width="1.0" stroke-linejoin="round"/>
<circle cx="1415.6" cy="346.3" r="2.3" fill="#fff" stroke="#d01818" stroke-width="0.7"/>
<polygon points="1429.9,345.2 1431.4,345.1 1432.2,347.6 1433.1,348.0 1435.3,346.5 1436.3,347.5 1435.1,349.8 1435.5,350.7 1438.1,351.2 1438.2,352.7 1435.7,353.5 1435.3,354.4 1436.8,356.6 1435.8,357.6 1433.5,356.4 1432.6,356.8 1432.1,359.4 1430.6,359.5 1429.8,357.0 1428.9,356.6 1426.7,358.1 1425.7,357.1 1426.9,354.8 1426.5,353.9 1423.9,353.4 1423.8,351.9 1426.3,351.1 1426.7,350.2 1425.2,348.0 1426.2,347.0 1428.5,348.2 1429.4,347.8" fill="#7a7a7a" stroke="#7a7a7a" stroke-width="1.0" stroke-linejoin="round"/>
<circle cx="1431.0" cy="352.3" r="1.8" fill="#fff" stroke="#7a7a7a" stroke-width="0.7"/>
<polygon points="1419.8,355.8 1421.0,355.7 1421.7,357.8 1422.4,358.1 1424.3,356.9 1425.1,357.7 1424.1,359.6 1424.5,360.4 1426.6,360.8 1426.7,362.0 1424.6,362.7 1424.3,363.4 1425.5,365.3 1424.7,366.1 1422.8,365.1 1422.0,365.5 1421.6,367.6 1420.4,367.7 1419.7,365.6 1419.0,365.3 1417.1,366.5 1416.3,365.7 1417.3,363.8 1416.9,363.0 1414.8,362.6 1414.7,361.4 1416.8,360.7 1417.1,360.0 1415.9,358.1 1416.7,357.3 1418.6,358.3 1419.4,357.9" fill="#8cb0e0" stroke="#6a90c8" stroke-width="0.8" stroke-linejoin="round"/>
<circle cx="1420.7" cy="361.7" r="1.5" fill="#fff" stroke="#6a90c8" stroke-width="0.6"/>
<path d="M1430.1 363.4H1442.1L1436.1 368.5Z" fill="#555"/>
<path d="M1471.5 338.7Q1464 338.7 1464 344V348H1472V349.5H1462Q1459 349.5 1459 356Q1459 362.5 1462 362.5H1465V358Q1465 354 1469 354H1476Q1480 354 1480 350V344Q1480 338.7 1471.5 338.7Z" fill="#3a72a8"/><circle cx="1468" cy="342" r="1.3" fill="#fff"/><path d="M1472.5 365.1Q1480 365.1 1480 360V356H1472V354.5H1482Q1485.6 354.5 1485.6 348Q1485.6 341.5 1482 341.5H1479V346Q1479 350 1475 350H1468Q1464 350 1464 354V360Q1464 365.1 1472.5 365.1Z" fill="#f6c936"/><circle cx="1476" cy="362" r="1.3" fill="#fff"/>
<path d="M1480.5 363.4H1492.5L1486.5 368.5Z" fill="#555"/>
<circle cx="1521.8" cy="352" r="14.3" fill="#f0f0f0" stroke="#777" stroke-width="1.8"/><path d="M1521.8 341V352L1528.5 357" fill="none" stroke="#555" stroke-width="1.6"/>
<path d="M1561 338H1576L1582.9 345V366H1561Z" fill="#fff" stroke="#8a8a8a" stroke-width="1.6"/><path d="M1576 338V345H1582.9" fill="none" stroke="#8a8a8a" stroke-width="1.3"/><path d="M1564.5 346h8M1564.5 351.5h14M1564.5 356.5h14M1564.5 361.5h11" stroke="#555" stroke-width="1.5"/>
<rect x="1604.4" y="341.2" width="2" height="21.3" fill="#d4d4d4"/><rect x="1668.1" y="341.2" width="2" height="21.3" fill="#d4d4d4"/>
<rect x="1623.3" y="339.8" width="17.4" height="16.6" fill="#fde84a" stroke="#c9a415" stroke-width="1.6"/><path d="M1636 364L1649 345L1651 346.5L1638.5 366Z" fill="#f2d24a" stroke="#8a7a30" stroke-width="1.2"/><path d="M1636 364L1635 367L1638.5 366" fill="#ddd" stroke="#777" stroke-width="1"/>
<g transform="translate(1691.60 344.10) rotate(38.40) scale(1.000)">
<rect x="5" y="-3" width="23" height="6" rx="2.5" fill="#f2dc78" stroke="#2e2e2e" stroke-width="1.6"/>
<rect x="4" y="-3" width="5" height="6" fill="#3a3a3a"/>
<path d="M-6.9 -2.8A7.4 7.4 0 1 1 -6.9 2.8L-2.2 2.6Q0.6 0 -2.2 -2.6Z" fill="#f4f6f4" stroke="#2e2e2e" stroke-width="1.5" stroke-linejoin="round"/>
<circle cx="25" cy="0" r="1.6" fill="#fff" stroke="#2e2e2e" stroke-width="1"/>
</g>
<circle cx="1418.2" cy="406.1" r="8.6" fill="none" stroke="#8a8a8a" stroke-width="2.3"/><path d="M1424.5 412.4L1431 418.9" stroke="#8a8a8a" stroke-width="2.6" stroke-linecap="round"/>
<path d="M1948 408L1957.5 397.9H1974.1V418.1H1957.5Z" fill="#9a9a9a"/><path d="M1959.5 402.5L1968.5 413.5M1968.5 402.5L1959.5 413.5" stroke="#fff" stroke-width="2"/>
<path d="M1408.3 445.5L1416.3 452.5L1408.3 459.5Z" fill="#555"/>
<circle cx="1453.8" cy="451.9" r="13.8" fill="#f8f8f8" stroke="#8a8a8a" stroke-width="1.6"/><path d="M1453.8 441V452L1460.5 456.5" fill="none" stroke="#555" stroke-width="1.5"/>
<path d="M1404.6 483.4H1419.2L1411.9 491.7Z" fill="#555"/>
<path d="M1404.6 555.7H1419.2L1411.9 564.0Z" fill="#555"/>
<path d="M1458.00 497.88A11.20 11.20 0 1 1 1463.69 492.76" fill="none" stroke="#78a828" stroke-width="5.2"/>
<path d="M1451.20 485.10L1454.54 488.11" stroke="#ee7010" stroke-width="6" />
<path d="M1454.54 488.11L1456.03 489.45" stroke="#f0e040" stroke-width="6" />
<path d="M1456.03 489.45L1466.81 499.15" stroke="#62a032" stroke-width="6" />
<path d="M1458.00 570.28A11.20 11.20 0 1 1 1463.69 565.16" fill="none" stroke="#78a828" stroke-width="5.2"/>
<path d="M1451.20 557.50L1454.54 560.51" stroke="#ee7010" stroke-width="6" />
<path d="M1454.54 560.51L1456.03 561.85" stroke="#f0e040" stroke-width="6" />
<path d="M1456.03 561.85L1466.81 571.55" stroke="#62a032" stroke-width="6" />
<path d="M1494.10 524.20L1505.50 524.20M1494.10 524.20L1502.16 532.26M1494.10 524.20L1494.10 535.60M1494.10 524.20L1486.04 532.26M1494.10 524.20L1482.70 524.20M1494.10 524.20L1486.04 516.14M1494.10 524.20L1494.10 512.80M1494.10 524.20L1502.16 516.14" stroke="#3a72c4" stroke-width="5.40" stroke-linecap="round"/>
<circle cx="1494.10" cy="524.20" r="8.70" fill="#3a72c4"/>
<path d="M1494.10 524.20L1505.50 524.20M1494.10 524.20L1502.16 532.26M1494.10 524.20L1494.10 535.60M1494.10 524.20L1486.04 532.26M1494.10 524.20L1482.70 524.20M1494.10 524.20L1486.04 516.14M1494.10 524.20L1494.10 512.80M1494.10 524.20L1502.16 516.14" stroke="#9ab8de" stroke-width="2.80" stroke-linecap="round"/>
<circle cx="1494.10" cy="524.20" r="7.40" fill="#9ab8de"/>
<circle cx="1494.10" cy="524.20" r="2.90" fill="#fff" stroke="#3a72c4" stroke-width="1.30"/>
<path d="M1494.10 632.80L1505.50 632.80M1494.10 632.80L1502.16 640.86M1494.10 632.80L1494.10 644.20M1494.10 632.80L1486.04 640.86M1494.10 632.80L1482.70 632.80M1494.10 632.80L1486.04 624.74M1494.10 632.80L1494.10 621.40M1494.10 632.80L1502.16 624.74" stroke="#3a72c4" stroke-width="5.40" stroke-linecap="round"/>
<circle cx="1494.10" cy="632.80" r="8.70" fill="#3a72c4"/>
<path d="M1494.10 632.80L1505.50 632.80M1494.10 632.80L1502.16 640.86M1494.10 632.80L1494.10 644.20M1494.10 632.80L1486.04 640.86M1494.10 632.80L1482.70 632.80M1494.10 632.80L1486.04 624.74M1494.10 632.80L1494.10 621.40M1494.10 632.80L1502.16 624.74" stroke="#9ab8de" stroke-width="2.80" stroke-linecap="round"/>
<circle cx="1494.10" cy="632.80" r="7.40" fill="#9ab8de"/>
<circle cx="1494.10" cy="632.80" r="2.90" fill="#fff" stroke="#3a72c4" stroke-width="1.30"/>
<path d="M1494.10 704.00L1505.50 704.00M1494.10 704.00L1502.16 712.06M1494.10 704.00L1494.10 715.40M1494.10 704.00L1486.04 712.06M1494.10 704.00L1482.70 704.00M1494.10 704.00L1486.04 695.94M1494.10 704.00L1494.10 692.60M1494.10 704.00L1502.16 695.94" stroke="#3a72c4" stroke-width="5.40" stroke-linecap="round"/>
<circle cx="1494.10" cy="704.00" r="8.70" fill="#3a72c4"/>
<path d="M1494.10 704.00L1505.50 704.00M1494.10 704.00L1502.16 712.06M1494.10 704.00L1494.10 715.40M1494.10 704.00L1486.04 712.06M1494.10 704.00L1482.70 704.00M1494.10 704.00L1486.04 695.94M1494.10 704.00L1494.10 692.60M1494.10 704.00L1502.16 695.94" stroke="#9ab8de" stroke-width="2.80" stroke-linecap="round"/>
<circle cx="1494.10" cy="704.00" r="7.40" fill="#9ab8de"/>
<circle cx="1494.10" cy="704.00" r="2.90" fill="#fff" stroke="#3a72c4" stroke-width="1.30"/>
<path d="M1494.10 596.10L1505.50 596.10M1494.10 596.10L1502.16 604.16M1494.10 596.10L1494.10 607.50M1494.10 596.10L1486.04 604.16M1494.10 596.10L1482.70 596.10M1494.10 596.10L1486.04 588.04M1494.10 596.10L1494.10 584.70M1494.10 596.10L1502.16 588.04" stroke="#b8ccec" stroke-width="4.80" stroke-linecap="round"/>
<circle cx="1494.10" cy="596.10" r="8.40" fill="#b8ccec"/>
<path d="M1494.10 596.10L1505.50 596.10M1494.10 596.10L1502.16 604.16M1494.10 596.10L1494.10 607.50M1494.10 596.10L1486.04 604.16M1494.10 596.10L1482.70 596.10M1494.10 596.10L1486.04 588.04M1494.10 596.10L1494.10 584.70M1494.10 596.10L1502.16 588.04" stroke="#a8c0e6" stroke-width="2.80" stroke-linecap="round"/>
<circle cx="1494.10" cy="596.10" r="7.40" fill="#a8c0e6"/>
<circle cx="1494.10" cy="596.10" r="2.90" fill="#1a62d4" stroke="#b8ccec" stroke-width="1.00"/>
<rect x="1517" y="578" width="380" height="35" fill="#1a6ee0"/>
<path d="M1483.5 656.5H1502.5L1503.5 662.5H1501.5Q1500.5 660 1497 660H1489.5L1496.5 668.8L1488.5 677.8H1498Q1501.5 677.8 1502.5 674.5H1504.5L1503 681.4H1483.5V679.8L1492.5 668.8L1483.5 658Z" fill="#8aa4c4" stroke="#5a7496" stroke-width="1.2" stroke-linejoin="round"/>
<rect x="1479.3" y="576.5" width="418" height="38" fill="none" stroke="#e8321e" stroke-width="3"/>
<circle cx="31.6" cy="1360.6" r="8.8" fill="none" stroke="#8a8a8a" stroke-width="2.4"/><path d="M38 1367L43.5 1372.5" stroke="#8a8a8a" stroke-width="2.8" stroke-linecap="round"/>
<g transform="rotate(-30 795 1361)"><rect x="786" y="1346" width="18" height="30" rx="9" fill="#fff" stroke="#111" stroke-width="2.4"/><path d="M786 1359h18M795 1346v13" stroke="#111" stroke-width="1.6"/><rect x="792.5" y="1350" width="5" height="8" rx="2.5" fill="#111"/><circle cx="795" cy="1369" r="2" fill="none" stroke="#111" stroke-width="1.4"/></g><path d="M804 1352l6 -4M781 1373l-3 2" stroke="#111" stroke-width="1.5" stroke-dasharray="2 2"/>
<svg x="838" y="1350" width="9" height="26" style="overflow:hidden;position:static"><text x="-3.5" y="20.5" font-family="Liberation Sans" font-size="22" fill="#1a1a1a">a</text></svg>
<svg x="1103" y="1350" width="17" height="26" style="overflow:hidden;position:static"><text x="-5" y="21.3" font-family="Liberation Sans" font-size="22" fill="#1a1a1a">in</text></svg>
<svg x="1329.5" y="1350" width="8" height="26" style="overflow:hidden;position:static"><text x="-4.5" y="20.9" font-family="Liberation Sans" font-size="22" fill="#1a1a1a">a</text></svg>
<svg x="491" y="1350" width="32" height="26" style="overflow:hidden;position:static"><text x="0.5" y="21" font-family="Liberation Sans" font-size="22" fill="#1a1a1a">rdin</text></svg>
<rect x="996" y="1341" width="1.5" height="43" fill="#c8c8c8"/><path d="M997.5 1341H1035V1384H997.5Z" fill="#f6f6f6"/>
<path d="M1007.7 1358.3H1022.6L1015.2 1365.7Z" fill="#555"/>
<path d="M1066 1363V1357Q1066 1349 1073.7 1349Q1081.4 1349 1081.4 1357V1363" fill="none" stroke="#6a6a6a" stroke-width="3.4"/><rect x="1061.6" y="1362" width="24.2" height="15.8" rx="2.5" fill="#666"/>
<rect x="1282.0" y="1342" width="1.6" height="42" fill="#bdbdbd"/><path d="M1283.6 1342H1310.0V1384H1283.6Z" fill="#f7f7f7"/>
<path d="M1288.2 1357.8H1303.5L1295.8 1349.8Z" fill="#555"/><path d="M1288.2 1367H1303.5L1295.8 1375Z" fill="#555"/>
<rect x="1511.7" y="1342" width="1.6" height="42" fill="#bdbdbd"/><path d="M1513.3 1342H1539.7V1384H1513.3Z" fill="#f7f7f7"/>
<path d="M1517.9 1357.8H1533.2L1525.5 1349.8Z" fill="#555"/><path d="M1517.9 1367H1533.2L1525.5 1375Z" fill="#555"/>
<rect x="1555.3" y="1350.2" width="25.5" height="24.2" rx="1.5" fill="#fff" stroke="#b4b4b4" stroke-width="1.6"/><path d="M1561.5 1362L1567 1370.5L1575 1355" fill="none" stroke="#1e1e1e" stroke-width="2.8"/>
<g fill="none" stroke="#7a7a7a" stroke-width="1.6"><ellipse cx="1714" cy="1362" rx="13" ry="12.5"/><ellipse cx="1714" cy="1362" rx="6" ry="12.5"/><path d="M1701 1362h26M1703 1356h22M1703 1368h22M1714 1349.5v25"/><path d="M1698.5 1359L1706 1349H1722L1729.5 1359Z" fill="#ececec"/><path d="M1701 1357h26M1704 1353h20"/></g>
<ellipse cx="1915.9" cy="1360" rx="15.9" ry="12" fill="#666"/><path d="M1914 1370L1930 1377.7L1922 1366Z" fill="#666"/><circle cx="1908.5" cy="1360.5" r="2.3" fill="#fff"/><circle cx="1916" cy="1360.5" r="2.3" fill="#fff"/><circle cx="1923.5" cy="1360.5" r="2.3" fill="#fff"/>
<rect x="1987" y="1370" width="2" height="2" fill="#c4c4c4"/>
<rect x="1982" y="1375" width="2" height="2" fill="#c4c4c4"/>
<rect x="1987" y="1375" width="2" height="2" fill="#c4c4c4"/>
<rect x="1977" y="1380" width="2" height="2" fill="#c4c4c4"/>
<rect x="1982" y="1380" width="2" height="2" fill="#c4c4c4"/>
<rect x="1987" y="1380" width="2" height="2" fill="#c4c4c4"/>
</svg>
<div class="t" style="left:78.0px;top:392.3px;font-size:25px;color:#262626;letter-spacing:1.39px">/Volumes</div>
<div class="t" style="left:78.0px;top:428.3px;font-size:25px;color:#262626;letter-spacing:0.78px">Favorites</div>
<div class="t" style="left:78.0px;top:464.3px;font-size:25px;color:#262626;letter-spacing:0.88px">Spatial Bookmarks</div>
<div class="t" style="left:78.0px;top:500.3px;font-size:25px;color:#262626;letter-spacing:0.95px">Home</div>
<div class="t" style="left:78.0px;top:536.3px;font-size:25px;color:#262626;letter-spacing:0.95px">/ (Macintosh HD)</div>
<div class="t" style="left:78.0px;top:572.3px;font-size:25px;color:#262626;letter-spacing:0.95px">GeoPackage</div>
<div class="t" style="left:78.0px;top:608.3px;font-size:25px;color:#262626;letter-spacing:0.95px">SpatiaLite</div>
<div class="t" style="left:78.0px;top:644.3px;font-size:25px;color:#262626;letter-spacing:0.95px">PostgreSQL</div>
<div class="t" style="left:78.0px;top:680.3px;font-size:25px;color:#262626;letter-spacing:0.95px">SAP HANA</div>
<div class="t" style="left:127.4px;top:858.0px;font-size:26px;color:#1e1e1e;font-weight:bold;letter-spacing:0.54px">landfill_sites</div>
<div class="t" style="left:127.4px;top:894.5px;font-size:26px;color:#1e1e1e;font-weight:bold;letter-spacing:0.38px">wards</div>
<div class="t" style="left:1482.4px;top:440.6px;font-size:25px;color:#262626;letter-spacing:0.81px">Recently used</div>
<div class="t" style="left:1482.4px;top:476.3px;font-size:25px;color:#262626;letter-spacing:1.04px">Vector analysis</div>
<div class="t" style="left:1523.0px;top:512.1px;font-size:25px;color:#262626;letter-spacing:0.93px">Join by lines (hub lines)</div>
<div class="t" style="left:1482.4px;top:547.9px;font-size:25px;color:#262626;letter-spacing:1.15px">Vector general</div>
<div class="t" style="left:1523.0px;top:619.4px;font-size:25px;color:#262626;letter-spacing:1.15px">Join attributes by location</div>
<div class="t" style="left:1523.0px;top:655.1px;font-size:25px;color:#262626;letter-spacing:1.13px">Join attributes by location (summary)</div>
<div class="t" style="left:1523.0px;top:691.0px;font-size:25px;color:#262626;letter-spacing:1.08px">Join attributes by nearest</div>
<div class="t" style="left:1523.0px;top:583.6px;font-size:25px;color:#ffffff;letter-spacing:1.08px">Join attributes by field value</div>
<div class="t" style="left:1448.3px;top:395.4px;font-size:25px;color:#262626;letter-spacing:1.06px">join attribute</div>
<div class="a" style="left:86px;top:818px;width:362px;height:36px;overflow:hidden"><div class="t" style="left:0.5px;top:4.7px;font-size:26px;font-weight:bold;color:#111;letter-spacing:0.55px">waste_disposal_september2023</div><div class="a" style="left:0;top:30px;width:362px;height:3px;background:#111"></div></div>
<div class="t" style="left:61.1px;top:1350.5px;font-size:25px;color:#8a8a8a;letter-spacing:1.6px">Type to locate (&#8984;K)</div>
<div class="t" style="left:447.2px;top:1352.4px;font-size:22px;color:#1a1a1a">To</div>
<div class="t" style="left:545.0px;top:1352.4px;font-size:22px;color:#1a1a1a;letter-spacing:1.26px">2057152,-3968695</div>
<div class="t" style="left:860.0px;top:1352.4px;font-size:22px;color:#1a1a1a;letter-spacing:0.40px">1:1356978</div>
<div class="t" style="left:1136.0px;top:1352.4px;font-size:22px;color:#1a1a1a">100%</div>
<div class="t" style="left:1366.7px;top:1351.8px;font-size:22px;color:#1a1a1a">0.0 °</div>
<div class="t" style="left:1592.9px;top:1351.8px;font-size:22px;color:#1a1a1a;letter-spacing:-0.03px">Render</div>
<div class="t" style="left:1734.2px;top:1351.8px;font-size:22px;color:#1a1a1a;letter-spacing:0.20px">EPSG:3857</div>
</body></html>
